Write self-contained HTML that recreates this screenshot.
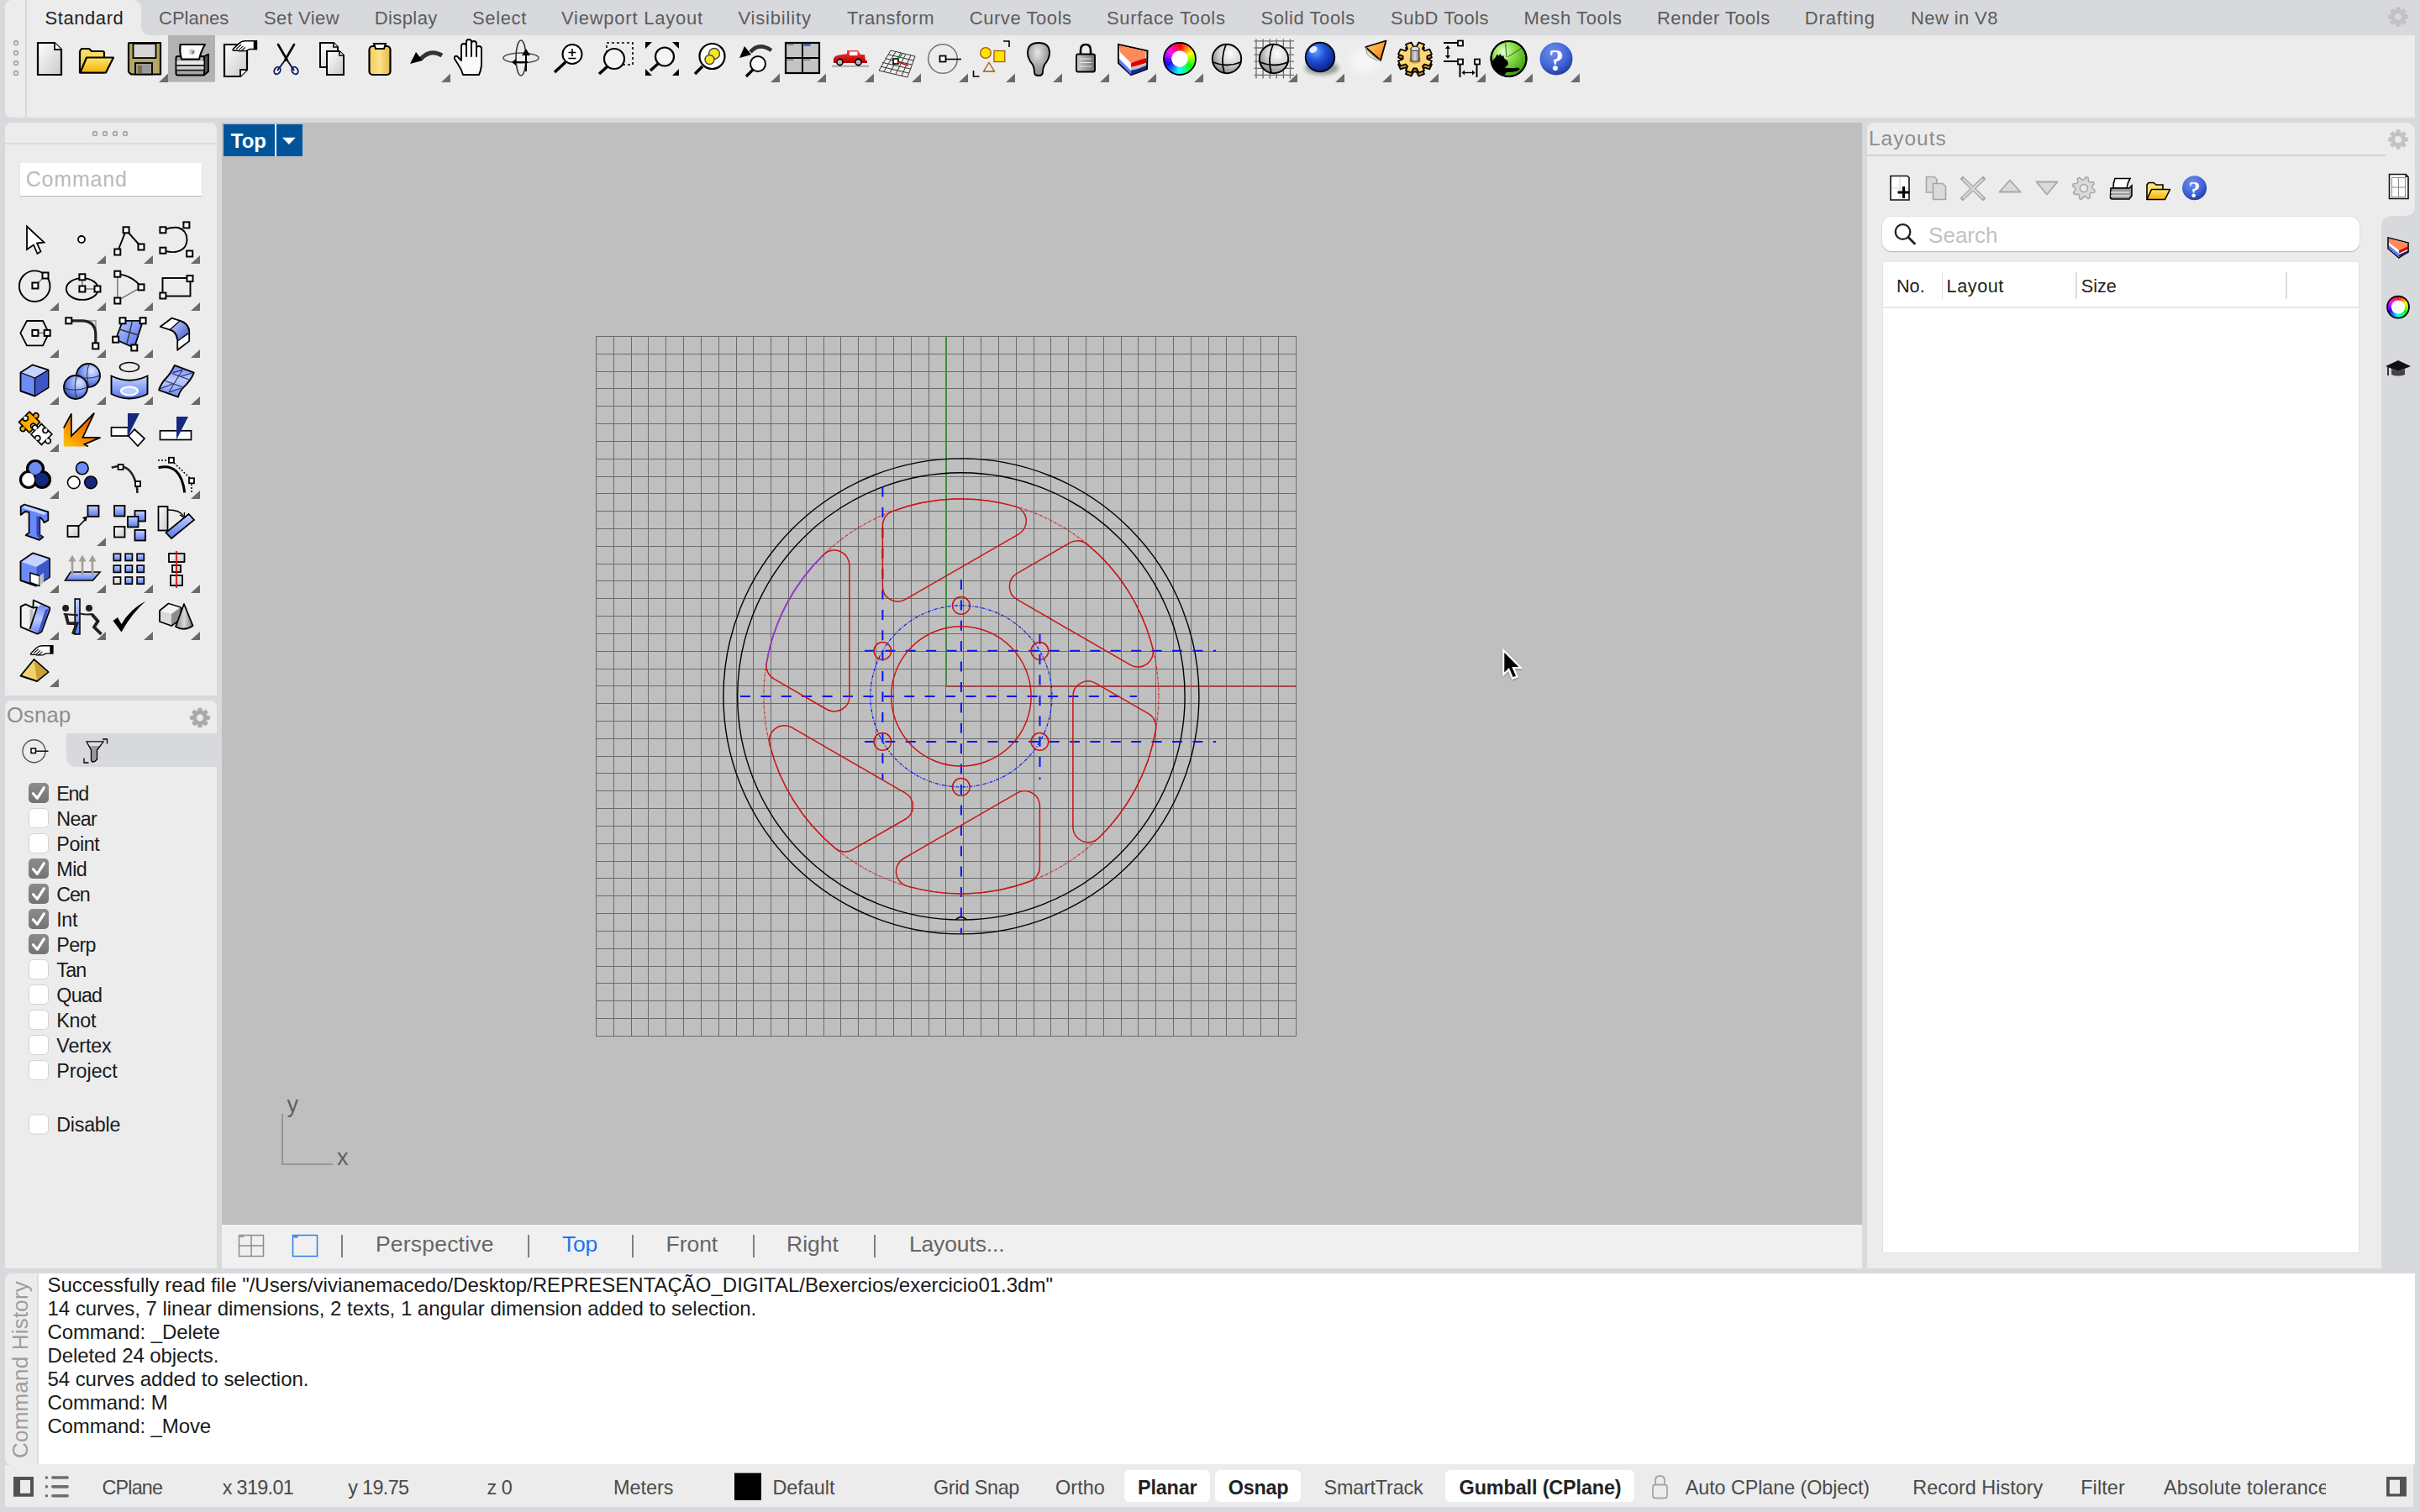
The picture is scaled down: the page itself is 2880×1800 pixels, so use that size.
<!DOCTYPE html>
<html><head><meta charset="utf-8"><title>Rhino</title>
<style>
*{box-sizing:border-box;margin:0;padding:0}
html,body{width:2880px;height:1800px;overflow:hidden;background:#d8d9dd;font-family:"Liberation Sans", sans-serif;}
.a{position:absolute}
.t{position:absolute;white-space:nowrap;line-height:1}
</style></head><body>

<div class="a" style="left:6px;top:42px;width:2868px;height:98px;background:#ececec;border-radius:0 0 0 8px"></div>
<div class="a" style="left:6px;top:0px;width:26px;height:140px;background:#ececec;border-radius:8px 0 0 8px"></div>
<div class="a" style="left:30px;top:0px;width:2px;height:140px;background:#d8d9dd"></div>
<div class="a" style="left:32px;top:0;width:136px;height:42px;background:#ececec;border-radius:0 10px 0 0"></div>
<div class="a" style="left:168px;top:32px;width:10px;height:10px;background:#ececec"></div>
<div class="a" style="left:168px;top:22px;width:20px;height:20px;background:#d8d9dd;border-radius:0 0 0 10px"></div>
<div class="t" style="left:53.6px;top:11.38px;font-size:22px;color:#222222;letter-spacing:0.551px;">Standard</div>
<div class="t" style="left:189px;top:11.38px;font-size:22px;color:#5c5c5c;letter-spacing:0.006px;">CPlanes</div>
<div class="t" style="left:314px;top:11.38px;font-size:22px;color:#5c5c5c;letter-spacing:0.447px;">Set View</div>
<div class="t" style="left:445.7px;top:11.38px;font-size:22px;color:#5c5c5c;letter-spacing:0.409px;">Display</div>
<div class="t" style="left:562px;top:11.38px;font-size:22px;color:#5c5c5c;letter-spacing:0.642px;">Select</div>
<div class="t" style="left:668px;top:11.38px;font-size:22px;color:#5c5c5c;letter-spacing:0.769px;">Viewport Layout</div>
<div class="t" style="left:878.5px;top:11.38px;font-size:22px;color:#5c5c5c;letter-spacing:0.814px;">Visibility</div>
<div class="t" style="left:1008px;top:11.38px;font-size:22px;color:#5c5c5c;letter-spacing:0.509px;">Transform</div>
<div class="t" style="left:1153.7px;top:11.38px;font-size:22px;color:#5c5c5c;letter-spacing:0.567px;">Curve Tools</div>
<div class="t" style="left:1317px;top:11.38px;font-size:22px;color:#5c5c5c;letter-spacing:0.670px;">Surface Tools</div>
<div class="t" style="left:1500.6px;top:11.38px;font-size:22px;color:#5c5c5c;letter-spacing:0.555px;">Solid Tools</div>
<div class="t" style="left:1655px;top:11.38px;font-size:22px;color:#5c5c5c;letter-spacing:0.489px;">SubD Tools</div>
<div class="t" style="left:1813.6px;top:11.38px;font-size:22px;color:#5c5c5c;letter-spacing:0.603px;">Mesh Tools</div>
<div class="t" style="left:1971.9px;top:11.38px;font-size:22px;color:#5c5c5c;letter-spacing:0.456px;">Render Tools</div>
<div class="t" style="left:2147.7px;top:11.38px;font-size:22px;color:#5c5c5c;letter-spacing:0.908px;">Drafting</div>
<div class="t" style="left:2274px;top:11.38px;font-size:22px;color:#5c5c5c;letter-spacing:0.392px;">New in V8</div>
<svg class="a" style="left:0;top:0" width="2880" height="140"><defs>
<linearGradient id="gPage" x1="0" y1="0" x2="1" y2="1"><stop offset="0" stop-color="#ffffff"/><stop offset="1" stop-color="#c9c9c9"/></linearGradient>
<linearGradient id="gFold" x1="0" y1="0" x2="0" y2="1"><stop offset="0" stop-color="#ffe56a"/><stop offset="1" stop-color="#f2b10a"/></linearGradient>
<linearGradient id="gFoldB" x1="0" y1="0" x2="0" y2="1"><stop offset="0" stop-color="#ffe16b"/><stop offset="1" stop-color="#e9c23a"/></linearGradient>
<linearGradient id="gClip" x1="0" y1="0" x2="1" y2="0"><stop offset="0" stop-color="#f3cf5c"/><stop offset="0.5" stop-color="#fde089"/><stop offset="1" stop-color="#e2b844"/></linearGradient>
<radialGradient id="gSph" cx="0.62" cy="0.32" r="0.7"><stop offset="0" stop-color="#ffffff"/><stop offset="0.5" stop-color="#d8d8d8"/><stop offset="1" stop-color="#8a8a8a"/></radialGradient>
<radialGradient id="gBlue" cx="0.35" cy="0.3" r="0.75"><stop offset="0" stop-color="#6aa0ff"/><stop offset="0.45" stop-color="#1c4fd8"/><stop offset="1" stop-color="#0a1e80"/></radialGradient>
<radialGradient id="gGreen" cx="0.35" cy="0.3" r="0.75"><stop offset="0" stop-color="#e6ffd0"/><stop offset="0.4" stop-color="#8ee04a"/><stop offset="1" stop-color="#3a9a10"/></radialGradient>
<radialGradient id="gHelp" cx="0.4" cy="0.3" r="0.8"><stop offset="0" stop-color="#6f8ff0"/><stop offset="0.6" stop-color="#3f63d6"/><stop offset="1" stop-color="#1b2f8a"/></radialGradient>
<radialGradient id="gBulb" cx="0.45" cy="0.3" r="0.7"><stop offset="0" stop-color="#e8e8e8"/><stop offset="0.6" stop-color="#a5a5a5"/><stop offset="1" stop-color="#8a8a8a"/></radialGradient>
<linearGradient id="gLock" x1="0" y1="0" x2="1" y2="0"><stop offset="0" stop-color="#d0d0d0"/><stop offset="1" stop-color="#6e6e6e"/></linearGradient>
<linearGradient id="gBlueF" x1="0" y1="0" x2="1" y2="1"><stop offset="0" stop-color="#b9c8ff"/><stop offset="1" stop-color="#4a6cf0"/></linearGradient>
<linearGradient id="gBlueS" x1="0" y1="0" x2="0" y2="1"><stop offset="0" stop-color="#c8d4ff"/><stop offset="1" stop-color="#5577ee"/></linearGradient>
<linearGradient id="gCone" x1="0" y1="0" x2="1" y2="1"><stop offset="0" stop-color="#ffe070"/><stop offset="1" stop-color="#ff6a00"/></linearGradient>
<linearGradient id="gGearS" x1="0" y1="0" x2="0" y2="1"><stop offset="0" stop-color="#ffe39a"/><stop offset="1" stop-color="#d88a2a"/></linearGradient>
<linearGradient id="gCyl" x1="0" y1="0" x2="1" y2="0"><stop offset="0" stop-color="#888"/><stop offset="0.5" stop-color="#d9d9d9"/><stop offset="1" stop-color="#777"/></linearGradient>
<linearGradient id="gRed" x1="0" y1="0" x2="0" y2="1"><stop offset="0" stop-color="#ff3a3a"/><stop offset="1" stop-color="#b00000"/></linearGradient>
<filter id="blur2" x="-50%" y="-50%" width="200%" height="200%"><feGaussianBlur stdDeviation="2.5"/></filter>
<filter id="blur4" x="-50%" y="-50%" width="200%" height="200%"><feGaussianBlur stdDeviation="5"/></filter>
<radialGradient id="gBlue2" cx="0.65" cy="0.3" r="0.8"><stop offset="0" stop-color="#e0e8ff"/><stop offset="0.5" stop-color="#7d9bf7"/><stop offset="1" stop-color="#2c46b8"/></radialGradient>
<linearGradient id="gExp" x1="0" y1="1" x2="1" y2="0"><stop offset="0" stop-color="#ffc400"/><stop offset="1" stop-color="#e83800"/></linearGradient>
<linearGradient id="gChk" x1="0" y1="0" x2="0" y2="1"><stop offset="0" stop-color="#8a8a8a"/><stop offset="1" stop-color="#6c6c6c"/></linearGradient>
<linearGradient id="gPyr" x1="0" y1="0" x2="1" y2="0"><stop offset="0" stop-color="#f7dc7a"/><stop offset="1" stop-color="#d9b242"/></linearGradient>
</defs><path d="M45 51 H65 L73 59 V89 H45 Z" fill="url(#gPage)" stroke="#000" stroke-width="2.2" stroke-linejoin="miter"/><path d="M65 51 V59 H73" fill="#fff" stroke="#000" stroke-width="1.7600000000000002"/><path d="M95 61 L97 58 H106 L109 61 H122 Q124 61 124 63 V86.5 H95 Z" fill="url(#gFoldB)" stroke="#000" stroke-width="2.2" stroke-linejoin="round"/><path d="M103 68.5 H135 L126 86.5 H95.5 Z" fill="url(#gFold)" stroke="#000" stroke-width="2.2" stroke-linejoin="round"/><path d="M153 52 Q153 51 154 51 H191 V88.5 H156 L153 85.5 Z" fill="#b8a664" stroke="#000" stroke-width="2.2" stroke-linejoin="round"/><rect x="158.5" y="52" width="27" height="17" fill="#d6d6d6" stroke="#000" stroke-width="1.8"/><rect x="161" y="75" width="20" height="13.5" fill="#9a9a9a" stroke="#000" stroke-width="1.8"/><rect x="164" y="78" width="5" height="9" fill="#7a6e3c"/><path d="M200 87.5 L200 98 L189 98 Z" fill="#6b6b6b"/><rect x="200" y="42" width="56" height="55.5" fill="#b2b2b2"/><path d="M243 67 L248 64.5 V85 L243 89.5 Z" fill="#4e4e4e" stroke="#000" stroke-width="1.8" stroke-linejoin="round"/><rect x="209.5" y="67" width="33.5" height="22.5" rx="2" fill="#a5a5a5" stroke="#000" stroke-width="2"/><rect x="210.5" y="72.5" width="32" height="4.5" fill="#e9e9e9"/><rect x="210.5" y="77" width="32" height="1.8" fill="#111"/><rect x="210.5" y="78.8" width="32" height="4" fill="#cfcfcf"/><rect x="210.5" y="82.8" width="32" height="1.6" fill="#111"/><path d="M214.5 53 H244 Q239.5 60 237 70.5 H216 Q213.5 62 214.5 53 Z" fill="#fff" stroke="#000" stroke-width="2" stroke-linejoin="round"/><path d="M225 59.5 l3.2 -1.8 l3.2 1.8 v3.8 l-3.2 1.8 l-3.2 -1.8 z" fill="#d0d0d0"/><path d="M228.2 61.3 l3.2 -1.8 v3.8 l-3.2 1.8 z" fill="#8a8a8a"/><path d="M267 53 H294 V83 L286 91 H267 Z" fill="url(#gPage)" stroke="#000" stroke-width="2.2"/><path d="M294 83 H286 V91" fill="#fff" stroke="#000" stroke-width="1.8"/><g transform="translate(276.5 48) scale(1.0)"><path d="M1.2 12.2 Q0 11.6 1 10.4 L8 3.6 Q11 0.8 15 0.8 H26 V10.6 H20.5 L16.5 12.4 Q14.5 13.2 12.8 12.4 L9.5 12.7 Q7.5 12.9 6.8 12.2 Z" fill="#fff" stroke="#000" stroke-width="1.5" stroke-linejoin="round"/><path d="M4.5 10.6 L10.5 5 M7.8 11.4 L13 6.8 M11.2 12 L15.5 8.4" stroke="#000" stroke-width="1.1"/><rect x="25.5" y="0" width="4.2" height="11.4" fill="#000"/></g><path d="M331 53 L342 72 M350 53 L339 72" stroke="#000" stroke-width="2.6" stroke-linecap="round"/><path d="M339 72 L330 84 M342 72 L350 84" stroke="#0a1a4a" stroke-width="2"/><ellipse cx="330" cy="84" rx="3.5" ry="4.5" fill="none" stroke="#0a1a6a" stroke-width="1.8" transform="rotate(30 330 84)"/><ellipse cx="351" cy="84" rx="3.5" ry="4.5" fill="none" stroke="#0a1a6a" stroke-width="1.8" transform="rotate(-30 351 84)"/><path d="M381 51 H397 L402 56 V80 H381 Z" fill="url(#gPage)" stroke="#000" stroke-width="2" stroke-linejoin="miter"/><path d="M397 51 V56 H402" fill="#fff" stroke="#000" stroke-width="1.6"/><path d="M389 61 H404 L409 66 V89 H389 Z" fill="url(#gPage)" stroke="#000" stroke-width="2" stroke-linejoin="miter"/><path d="M404 61 V66 H409" fill="#fff" stroke="#000" stroke-width="1.6"/><rect x="439.5" y="55" width="25" height="34" rx="4" fill="url(#gClip)" stroke="#000" stroke-width="2.2"/><path d="M445 52 H459 L457 58 H447 Z" fill="#fff" stroke="#000" stroke-width="2"/><path d="M501 70 Q512 58 526 66" fill="none" stroke="#333" stroke-width="5"/><path d="M488 76 L495 62 L503 72 Z" fill="#000"/><path d="M536 87.5 L536 98 L525 98 Z" fill="#6b6b6b"/><path d="M551 89 Q550 84 546 78 L541 70 Q540 66 544 67 L549 72 V55 Q549 52 552 52 Q555 52 555 55 V67 V50 Q555 47 558 47 Q561 47 561 50 V67 V52 Q561 49 564 49 Q567 49 567 52 V67 V57 Q567 55 570 55 Q573 55 573 58 V78 Q572 85 570 89 Z" fill="#fafafa" stroke="#000" stroke-width="1.9" stroke-linejoin="round"/><ellipse cx="620" cy="69" rx="21" ry="6" fill="none" stroke="#555" stroke-width="1.6"/><ellipse cx="620" cy="69" rx="6" ry="21" fill="none" stroke="#333" stroke-width="1.6"/><path d="M626 85 L626 62" stroke="#000" stroke-width="2"/><path d="M621 66 L626 58 L631 66 Z" fill="#000"/><path d="M628 74 L612 74" stroke="#000" stroke-width="2"/><path d="M614 70 L609 74 L614 78 Z" fill="#000"/><circle cx="681" cy="64.5" r="11.5" fill="#fff" stroke="#000" stroke-width="2"/><path d="M673 74 L660 86" stroke="#000" stroke-width="3.5"/><path d="M681 58 V67 M676.5 62.5 H685.5 M676.5 69.5 H685.5" stroke="#000" stroke-width="1.6"/><rect x="722" y="51" width="31" height="26" fill="none" stroke="#000" stroke-width="1.6" stroke-dasharray="3 3"/><circle cx="731" cy="70" r="12" fill="#f4f4f4" stroke="#000" stroke-width="2.2"/><path d="M723 79 L713 88" stroke="#000" stroke-width="3.5"/><path d="M768 50 H776 L768 58 Z M808 50 H800 L808 58 Z M768 90 H776 L768 82 Z M808 90 H800 L808 82 Z" fill="#000"/><circle cx="791" cy="67.5" r="11" fill="#f4f4f4" stroke="#000" stroke-width="2.2"/><path d="M783 76 L774 84" stroke="#000" stroke-width="3.5"/><circle cx="847.5" cy="67" r="15" fill="#fff" stroke="#000" stroke-width="2.2"/><circle cx="850" cy="64" r="6.5" fill="#f5e623" stroke="#444" stroke-width="1.4"/><circle cx="844.5" cy="71" r="5.5" fill="#f5e623" stroke="#444" stroke-width="1.4"/><path d="M836 79 L827 88" stroke="#000" stroke-width="3.5"/><path d="M893 62 Q903 50 918 60" fill="none" stroke="#333" stroke-width="4.5"/><path d="M880 69 L886 55 L894 65 Z" fill="#000"/><circle cx="902" cy="76" r="9" fill="#fafafa" stroke="#000" stroke-width="2"/><path d="M896 83 L888 91" stroke="#000" stroke-width="3.2"/><path d="M928 87.5 L928 98 L917 98 Z" fill="#6b6b6b"/><rect x="935" y="51" width="40" height="36" fill="#c4c4c4" stroke="#000" stroke-width="2.2"/><path d="M955 51 V87 M935 69 H975" stroke="#000" stroke-width="2"/><rect x="956.5" y="52.5" width="8" height="2" fill="#1a3ca8"/><rect x="936.5" y="52.5" width="8" height="1.5" fill="#777"/><rect x="936.5" y="70.5" width="8" height="1.5" fill="#777"/><rect x="956.5" y="70.5" width="8" height="1.5" fill="#777"/><path d="M983 87.5 L983 98 L972 98 Z" fill="#6b6b6b"/><rect x="990" y="78" width="44" height="1.6" fill="#9a9a9a"/><path d="M992 73 Q991 68 996 66 L1008 64 V60 H1021 L1024 65 H1029 L1030 72 H1032 V75 H992 Z" fill="url(#gRed)"/><rect x="1011" y="61.5" width="9.5" height="4.5" fill="#fff"/><circle cx="999.5" cy="74" r="3.6" fill="#bbb" stroke="#000" stroke-width="1.6"/><circle cx="1021.5" cy="74" r="3.6" fill="#bbb" stroke="#000" stroke-width="1.6"/><path d="M1040 87.5 L1040 98 L1029 98 Z" fill="#6b6b6b"/><g stroke="#333" stroke-width="1" fill="none"><path d="M1060 60 L1089 67 L1080 92 L1046 84 Z"/><path d="M1057 64.8 L1087 72 M1053.5 69.6 L1085 77 M1050 74.4 L1083.5 82 M1048 79.2 L1081.5 87"/><path d="M1066 61.4 L1052 85 M1072 62.8 L1059 86.6 M1078 64.2 L1066 88.2 M1084 65.6 L1073 90"/></g><rect x="1063" y="70" width="6" height="6" fill="#fff" stroke="#000" stroke-width="1.6"/><path d="M1069 70 L1074 64" stroke="#1a9a1a" stroke-width="1.6"/><path d="M1069 74 L1081 78" stroke="#d01010" stroke-width="1.8"/><path d="M1096 87.5 L1096 98 L1085 98 Z" fill="#6b6b6b"/><circle cx="1122" cy="70" r="17.3" fill="none" stroke="#777" stroke-width="1.6"/><rect x="1118.5" y="66.5" width="7" height="7" fill="#fff" stroke="#000" stroke-width="1.8"/><path d="M1125.5 70.5 H1144" stroke="#000" stroke-width="1.6"/><path d="M1152 87.5 L1152 98 L1141 98 Z" fill="#6b6b6b"/><circle cx="1173" cy="63" r="6.3" fill="#ffe400" stroke="#a05a00" stroke-width="1.3"/><rect x="1183" y="60.5" width="12.8" height="13" fill="#ffe400" stroke="#a05a00" stroke-width="1.3"/><path d="M1177 74.5 L1183.5 85 H1170.5 Z" fill="none" stroke="#a05a00" stroke-width="1.3"/><path d="M1194 49 H1201 V56 M1158.5 84 V91 H1165.5" fill="none" stroke="#000" stroke-width="1.6"/><path d="M1208 87.5 L1208 98 L1197 98 Z" fill="#6b6b6b"/><path d="M1236 51 Q1249 51 1249 63 Q1249 70 1243 77 Q1241 81 1241 86 Q1241 90 1236 90 Q1231 90 1231 86 Q1231 81 1229 77 Q1223 70 1223 63 Q1223 51 1236 51 Z" fill="url(#gBulb)" stroke="#000" stroke-width="1.9"/><path d="M1264 87.5 L1264 98 L1253 98 Z" fill="#6b6b6b"/><path d="M1286 66 V60 Q1286 53 1292 53 Q1298 53 1298 60 V66" fill="none" stroke="#000" stroke-width="2.6"/><rect x="1281" y="64.5" width="22" height="21" rx="2" fill="url(#gLock)" stroke="#000" stroke-width="1.9"/><path d="M1285 70 H1299 M1285 74.5 H1299 M1285 79 H1299" stroke="#e8e8e8" stroke-width="1.2"/><path d="M1320 87.5 L1320 98 L1309 98 Z" fill="#6b6b6b"/><path d="M1331 53 L1365.5 60.5 L1365 82 Q1355 86 1346 89 L1331 75 Z" fill="#fff" stroke="#000" stroke-width="2"/><path d="M1332 54 L1364 61 L1363 70 Q1354 72 1346 75 L1333 62 Z" fill="#ff8a5a"/><path d="M1346 75 Q1354 72 1364 69 V75 Q1355 78 1346 80 Z" fill="#e00000"/><path d="M1346 80 Q1355 78 1364 75 V78 Q1355 82 1346 84 Z" fill="#c0c0c0"/><path d="M1346 84 Q1355 82 1364 78 V82 Q1355 86 1346 89 Z" fill="#1a2a90"/><path d="M1332 70 L1346 84 V89 L1332 75 Z" fill="#5a7aff"/><path d="M1376 87.5 L1376 98 L1365 98 Z" fill="#6b6b6b"/><path d="M1404.00 51.00 A19 19 0 0 1 1406.60 51.18 L1405.32 60.49 A9.6 9.6 0 0 0 1404.00 60.40 Z" fill="#ff0000"/><path d="M1406.48 51.16 A19 19 0 0 1 1409.04 51.68 L1406.55 60.74 A9.6 9.6 0 0 0 1405.25 60.48 Z" fill="#ff1f00"/><path d="M1408.92 51.65 A19 19 0 0 1 1411.39 52.49 L1407.73 61.15 A9.6 9.6 0 0 0 1406.48 60.73 Z" fill="#ff3f00"/><path d="M1411.27 52.45 A19 19 0 0 1 1413.61 53.61 L1408.85 61.72 A9.6 9.6 0 0 0 1407.67 61.13 Z" fill="#ff5f00"/><path d="M1413.50 53.55 A19 19 0 0 1 1415.66 55.00 L1409.89 62.42 A9.6 9.6 0 0 0 1408.80 61.69 Z" fill="#ff7f00"/><path d="M1415.57 54.93 A19 19 0 0 1 1417.52 56.65 L1410.83 63.26 A9.6 9.6 0 0 0 1409.84 62.38 Z" fill="#ff9f00"/><path d="M1417.44 56.56 A19 19 0 0 1 1419.15 58.53 L1411.65 64.21 A9.6 9.6 0 0 0 1410.79 63.21 Z" fill="#ffbf00"/><path d="M1419.07 58.43 A19 19 0 0 1 1420.52 60.61 L1412.35 65.25 A9.6 9.6 0 0 0 1411.62 64.16 Z" fill="#ffdf00"/><path d="M1420.45 60.50 A19 19 0 0 1 1421.60 62.84 L1412.89 66.38 A9.6 9.6 0 0 0 1412.31 65.20 Z" fill="#ffff00"/><path d="M1421.55 62.73 A19 19 0 0 1 1422.38 65.20 L1413.29 67.58 A9.6 9.6 0 0 0 1412.87 66.33 Z" fill="#dfff00"/><path d="M1422.35 65.08 A19 19 0 0 1 1422.85 67.64 L1413.53 68.81 A9.6 9.6 0 0 0 1413.27 67.52 Z" fill="#bfff00"/><path d="M1422.84 67.52 A19 19 0 0 1 1423.00 70.12 L1413.60 70.06 A9.6 9.6 0 0 0 1413.52 68.75 Z" fill="#9fff00"/><path d="M1423.00 70.00 A19 19 0 0 1 1422.82 72.60 L1413.51 71.32 A9.6 9.6 0 0 0 1413.60 70.00 Z" fill="#7fff00"/><path d="M1422.84 72.48 A19 19 0 0 1 1422.32 75.04 L1413.26 72.55 A9.6 9.6 0 0 0 1413.52 71.25 Z" fill="#5fff00"/><path d="M1422.35 74.92 A19 19 0 0 1 1421.51 77.39 L1412.85 73.73 A9.6 9.6 0 0 0 1413.27 72.48 Z" fill="#3fff00"/><path d="M1421.55 77.27 A19 19 0 0 1 1420.39 79.61 L1412.28 74.85 A9.6 9.6 0 0 0 1412.87 73.67 Z" fill="#1fff00"/><path d="M1420.45 79.50 A19 19 0 0 1 1419.00 81.66 L1411.58 75.89 A9.6 9.6 0 0 0 1412.31 74.80 Z" fill="#00ff00"/><path d="M1419.07 81.57 A19 19 0 0 1 1417.35 83.52 L1410.74 76.83 A9.6 9.6 0 0 0 1411.62 75.84 Z" fill="#00ff1f"/><path d="M1417.44 83.44 A19 19 0 0 1 1415.47 85.15 L1409.79 77.65 A9.6 9.6 0 0 0 1410.79 76.79 Z" fill="#00ff3f"/><path d="M1415.57 85.07 A19 19 0 0 1 1413.39 86.52 L1408.75 78.35 A9.6 9.6 0 0 0 1409.84 77.62 Z" fill="#00ff5f"/><path d="M1413.50 86.45 A19 19 0 0 1 1411.16 87.60 L1407.62 78.89 A9.6 9.6 0 0 0 1408.80 78.31 Z" fill="#00ff7f"/><path d="M1411.27 87.55 A19 19 0 0 1 1408.80 88.38 L1406.42 79.29 A9.6 9.6 0 0 0 1407.67 78.87 Z" fill="#00ff9f"/><path d="M1408.92 88.35 A19 19 0 0 1 1406.36 88.85 L1405.19 79.53 A9.6 9.6 0 0 0 1406.48 79.27 Z" fill="#00ffbf"/><path d="M1406.48 88.84 A19 19 0 0 1 1403.88 89.00 L1403.94 79.60 A9.6 9.6 0 0 0 1405.25 79.52 Z" fill="#00ffdf"/><path d="M1404.00 89.00 A19 19 0 0 1 1401.40 88.82 L1402.68 79.51 A9.6 9.6 0 0 0 1404.00 79.60 Z" fill="#00ffff"/><path d="M1401.52 88.84 A19 19 0 0 1 1398.96 88.32 L1401.45 79.26 A9.6 9.6 0 0 0 1402.75 79.52 Z" fill="#00dfff"/><path d="M1399.08 88.35 A19 19 0 0 1 1396.61 87.51 L1400.27 78.85 A9.6 9.6 0 0 0 1401.52 79.27 Z" fill="#00bfff"/><path d="M1396.73 87.55 A19 19 0 0 1 1394.39 86.39 L1399.15 78.28 A9.6 9.6 0 0 0 1400.33 78.87 Z" fill="#009fff"/><path d="M1394.50 86.45 A19 19 0 0 1 1392.34 85.00 L1398.11 77.58 A9.6 9.6 0 0 0 1399.20 78.31 Z" fill="#007fff"/><path d="M1392.43 85.07 A19 19 0 0 1 1390.48 83.35 L1397.17 76.74 A9.6 9.6 0 0 0 1398.16 77.62 Z" fill="#005fff"/><path d="M1390.56 83.44 A19 19 0 0 1 1388.85 81.47 L1396.35 75.79 A9.6 9.6 0 0 0 1397.21 76.79 Z" fill="#003fff"/><path d="M1388.93 81.57 A19 19 0 0 1 1387.48 79.39 L1395.65 74.75 A9.6 9.6 0 0 0 1396.38 75.84 Z" fill="#001fff"/><path d="M1387.55 79.50 A19 19 0 0 1 1386.40 77.16 L1395.11 73.62 A9.6 9.6 0 0 0 1395.69 74.80 Z" fill="#0000ff"/><path d="M1386.45 77.27 A19 19 0 0 1 1385.62 74.80 L1394.71 72.42 A9.6 9.6 0 0 0 1395.13 73.67 Z" fill="#1f00ff"/><path d="M1385.65 74.92 A19 19 0 0 1 1385.15 72.36 L1394.47 71.19 A9.6 9.6 0 0 0 1394.73 72.48 Z" fill="#3f00ff"/><path d="M1385.16 72.48 A19 19 0 0 1 1385.00 69.88 L1394.40 69.94 A9.6 9.6 0 0 0 1394.48 71.25 Z" fill="#5f00ff"/><path d="M1385.00 70.00 A19 19 0 0 1 1385.18 67.40 L1394.49 68.68 A9.6 9.6 0 0 0 1394.40 70.00 Z" fill="#7f00ff"/><path d="M1385.16 67.52 A19 19 0 0 1 1385.68 64.96 L1394.74 67.45 A9.6 9.6 0 0 0 1394.48 68.75 Z" fill="#9f00ff"/><path d="M1385.65 65.08 A19 19 0 0 1 1386.49 62.61 L1395.15 66.27 A9.6 9.6 0 0 0 1394.73 67.52 Z" fill="#bf00ff"/><path d="M1386.45 62.73 A19 19 0 0 1 1387.61 60.39 L1395.72 65.15 A9.6 9.6 0 0 0 1395.13 66.33 Z" fill="#df00ff"/><path d="M1387.55 60.50 A19 19 0 0 1 1389.00 58.34 L1396.42 64.11 A9.6 9.6 0 0 0 1395.69 65.20 Z" fill="#ff00ff"/><path d="M1388.93 58.43 A19 19 0 0 1 1390.65 56.48 L1397.26 63.17 A9.6 9.6 0 0 0 1396.38 64.16 Z" fill="#ff00df"/><path d="M1390.56 56.56 A19 19 0 0 1 1392.53 54.85 L1398.21 62.35 A9.6 9.6 0 0 0 1397.21 63.21 Z" fill="#ff00bf"/><path d="M1392.43 54.93 A19 19 0 0 1 1394.61 53.48 L1399.25 61.65 A9.6 9.6 0 0 0 1398.16 62.38 Z" fill="#ff009f"/><path d="M1394.50 53.55 A19 19 0 0 1 1396.84 52.40 L1400.38 61.11 A9.6 9.6 0 0 0 1399.20 61.69 Z" fill="#ff007f"/><path d="M1396.73 52.45 A19 19 0 0 1 1399.20 51.62 L1401.58 60.71 A9.6 9.6 0 0 0 1400.33 61.13 Z" fill="#ff005f"/><path d="M1399.08 51.65 A19 19 0 0 1 1401.64 51.15 L1402.81 60.47 A9.6 9.6 0 0 0 1401.52 60.73 Z" fill="#ff003f"/><path d="M1401.52 51.16 A19 19 0 0 1 1404.12 51.00 L1404.06 60.40 A9.6 9.6 0 0 0 1402.75 60.48 Z" fill="#ff001f"/><circle cx="1404" cy="70" r="9.6" fill="#fff"/><circle cx="1404" cy="70" r="19" fill="none" stroke="#000" stroke-width="1.8"/><path d="M1432 87.5 L1432 98 L1421 98 Z" fill="#6b6b6b"/><circle cx="1460" cy="70" r="17.2" fill="url(#gSph)" stroke="#000" stroke-width="2"/><path d="M1443.5 74 Q1460 81 1476.5 74" fill="none" stroke="#000" stroke-width="1.8"/><path d="M1459 53 Q1452 70 1457 87" fill="none" stroke="#000" stroke-width="1.8"/><g stroke="#6e6e6e" stroke-width="1.3"><path d="M1495.0 46.5 V93.5"/><path d="M1503.1 46.5 V93.5"/><path d="M1511.2 46.5 V93.5"/><path d="M1519.3 46.5 V93.5"/><path d="M1527.4 46.5 V93.5"/><path d="M1535.5 46.5 V93.5"/><path d="M1492.5 48.9 H1540"/><path d="M1492.5 57.0 H1540"/><path d="M1492.5 65.1 H1540"/><path d="M1492.5 73.19999999999999 H1540"/><path d="M1492.5 81.3 H1540"/><path d="M1492.5 89.4 H1540"/></g><circle cx="1516" cy="70" r="17.2" fill="url(#gSph)" stroke="#000" stroke-width="2"/><path d="M1499.5 74 Q1516 81 1532.5 74" fill="none" stroke="#000" stroke-width="1.8"/><path d="M1515 53 Q1508 70 1513 87" fill="none" stroke="#000" stroke-width="1.8"/><path d="M1544 87.5 L1544 98 L1533 98 Z" fill="#6b6b6b"/><ellipse cx="1573" cy="81" rx="20" ry="8" fill="#000" opacity="0.35" filter="url(#blur2)"/><circle cx="1571" cy="68" r="17.3" fill="url(#gBlue)" stroke="#000" stroke-width="1.8"/><ellipse cx="1563" cy="59" rx="5" ry="3.5" fill="#e8f0ff" transform="rotate(-30 1563 59)"/><path d="M1600 87.5 L1600 98 L1589 98 Z" fill="#6b6b6b"/><ellipse cx="1625" cy="72" rx="18" ry="14" fill="#ffffff" opacity="0.55" filter="url(#blur4)"/><path d="M1625 56 L1649.5 48.5 L1643 72 Z" fill="url(#gCone)" stroke="#000" stroke-width="1.8" stroke-linejoin="round"/><path d="M1625 56 Q1630 66 1643 72 Q1632 71 1627 64 Z" fill="#fff2cc" stroke="#888" stroke-width="1"/><path d="M1656 87.5 L1656 98 L1645 98 Z" fill="#6b6b6b"/><polygon points="1698.4,74.1 1704.0,76.5 1701.3,82.4 1695.4,80.5 1692.9,82.8 1695.0,88.1 1688.5,90.5 1685.8,85.5 1682.2,85.5 1679.5,90.5 1673.0,88.1 1675.1,82.8 1672.6,80.5 1666.7,82.4 1664.0,76.5 1669.6,74.1 1669.6,70.9 1664.0,68.5 1666.7,62.6 1672.6,64.5 1675.1,62.2 1673.0,56.9 1679.5,54.5 1682.2,59.5 1685.8,59.5 1688.5,54.5 1695.0,56.9 1692.9,62.2 1695.4,64.5 1701.3,62.6 1704.0,68.5 1698.4,70.9" fill="#d48a2a" stroke="#000" stroke-width="1.8" stroke-linejoin="round"/><polygon points="1698.4,70.1 1704.0,72.5 1701.3,78.4 1695.4,76.5 1692.9,78.8 1695.0,84.1 1688.5,86.5 1685.8,81.5 1682.2,81.5 1679.5,86.5 1673.0,84.1 1675.1,78.8 1672.6,76.5 1666.7,78.4 1664.0,72.5 1669.6,70.1 1669.6,66.9 1664.0,64.5 1666.7,58.6 1672.6,60.5 1675.1,58.2 1673.0,52.9 1679.5,50.5 1682.2,55.5 1685.8,55.5 1688.5,50.5 1695.0,52.9 1692.9,58.2 1695.4,60.5 1701.3,58.6 1704.0,64.5 1698.4,66.9" fill="#ffd778" stroke="#000" stroke-width="1.8" stroke-linejoin="round"/><ellipse cx="1684" cy="71" rx="7" ry="5" fill="#c98a30" opacity="0.6"/><rect x="1679" y="58" width="10" height="15" fill="url(#gCyl)" stroke="#333" stroke-width="1"/><ellipse cx="1684" cy="58" rx="5" ry="2.5" fill="#ddd" stroke="#333" stroke-width="1"/><path d="M1712 87.5 L1712 98 L1701 98 Z" fill="#6b6b6b"/><path d="M1718 51 H1735 M1718 73 H1735 M1737.5 76 V92 M1757.5 76 V92" stroke="#000" stroke-width="2"/><rect x="1735" y="48.5" width="6" height="6" fill="#fff" stroke="#000" stroke-width="1.8"/><rect x="1735" y="70.5" width="6" height="6" fill="#fff" stroke="#000" stroke-width="1.8"/><rect x="1755" y="70.5" width="6" height="6" fill="#fff" stroke="#000" stroke-width="1.8"/><path d="M1723 56 V68" stroke="#000" stroke-width="1.4"/><path d="M1720 58 L1723 54 L1726 58 Z M1720 66 L1723 70 L1726 66 Z" fill="#000"/><path d="M1742 86.5 H1753" stroke="#000" stroke-width="1.4"/><path d="M1743 83.5 L1739.5 86.5 L1743 89.5 Z M1752 83.5 L1755.5 86.5 L1752 89.5 Z" fill="#000"/><path d="M1768 87.5 L1768 98 L1757 98 Z" fill="#6b6b6b"/><circle cx="1795.5" cy="70" r="21" fill="url(#gGreen)" stroke="#000" stroke-width="2"/><clipPath id="cpGlobe"><circle cx="1795.5" cy="70" r="20"/></clipPath><g clip-path="url(#cpGlobe)"><path d="M1770 76 L1774 74.5 L1780 68 L1781.5 64.5 L1783.5 66.5 L1785.5 64 L1787 67 L1789 66 L1790.5 70 Q1796 72.5 1794.5 77.5 L1790.5 80.5 Q1798 81.5 1806 80.5 L1809 82 L1806 84.5 Q1798 86.5 1793 86 Q1790 90 1786 93 L1770 93 Z" fill="#000"/></g><path d="M1791.6 51.6 L1792.9 67.8 M1794.4 67.8 L1810.6 57.4" stroke="#2a4a1a" stroke-width="0.9" fill="none"/><circle cx="1795.5" cy="70" r="21" fill="none" stroke="#000" stroke-width="2"/><path d="M1824 87.5 L1824 98 L1813 98 Z" fill="#6b6b6b"/><circle cx="1852" cy="70" r="19.5" fill="url(#gHelp)"/><text x="1852" y="84" text-anchor="middle" font-family="Liberation Serif" font-weight="bold" font-size="36" fill="#fff">?</text><path d="M1880 87.5 L1880 98 L1869 98 Z" fill="#6b6b6b"/><circle cx="19" cy="51" r="2.4" fill="none" stroke="#a3a3a3" stroke-width="1.6"/><circle cx="19" cy="63" r="2.4" fill="none" stroke="#a3a3a3" stroke-width="1.6"/><circle cx="19" cy="75" r="2.4" fill="none" stroke="#a3a3a3" stroke-width="1.6"/><circle cx="19" cy="87" r="2.4" fill="none" stroke="#a3a3a3" stroke-width="1.6"/><polygon points="2851.49,11.87 2852.05,8.67 2855.95,8.67 2856.51,11.87 2857.97,12.47 2860.64,10.61 2863.39,13.36 2861.53,16.03 2862.13,17.49 2865.33,18.05 2865.33,21.95 2862.13,22.51 2861.53,23.97 2863.39,26.64 2860.64,29.39 2857.97,27.53 2856.51,28.13 2855.95,31.33 2852.05,31.33 2851.49,28.13 2850.03,27.53 2847.36,29.39 2844.61,26.64 2846.47,23.97 2845.87,22.51 2842.67,21.95 2842.67,18.05 2845.87,17.49 2846.47,16.03 2844.61,13.36 2847.36,10.61 2850.03,12.47" fill="#c2c2c4" stroke="#c2c2c4" stroke-width="0.8" stroke-linejoin="round"/><circle cx="2854" cy="20" r="3.91" fill="#d8d9dd"/></svg>
<div class="a" style="left:6px;top:146px;width:252px;height:682px;background:#ececec;border-radius:8px 8px 0 0"></div>
<div class="a" style="left:6px;top:170px;width:252px;height:2px;background:#dcdcdc"></div>
<div class="a" style="left:24px;top:193.5px;width:216px;height:39.5px;background:#fff;box-shadow:0 1px 1px rgba(0,0,0,0.18)"></div>
<div class="t" style="left:30.75px;top:201.14px;font-size:25px;color:#b9b9b9;letter-spacing:0.812px;">Command</div>
<svg class="a" style="left:0;top:0" width="260" height="830"><defs><linearGradient id="gPage" x1="0" y1="0" x2="1" y2="1"><stop offset="0" stop-color="#ffffff"/><stop offset="1" stop-color="#c9c9c9"/></linearGradient><linearGradient id="gBlueF" x1="0" y1="0" x2="1" y2="1"><stop offset="0" stop-color="#b9c8ff"/><stop offset="1" stop-color="#4a6cf0"/></linearGradient><linearGradient id="gBlueS" x1="0" y1="0" x2="0" y2="1"><stop offset="0" stop-color="#c8d4ff"/><stop offset="1" stop-color="#5577ee"/></linearGradient><radialGradient id="gBlue2" cx="0.65" cy="0.3" r="0.8"><stop offset="0" stop-color="#e0e8ff"/><stop offset="0.5" stop-color="#7d9bf7"/><stop offset="1" stop-color="#2c46b8"/></radialGradient><linearGradient id="gExp" x1="0" y1="1" x2="1" y2="0"><stop offset="0" stop-color="#ffc400"/><stop offset="1" stop-color="#e83800"/></linearGradient><linearGradient id="gPuz" x1="0" y1="0" x2="1" y2="1"><stop offset="0" stop-color="#ff9000"/><stop offset="1" stop-color="#ffc800"/></linearGradient><linearGradient id="gBlueD" x1="0" y1="0" x2="1" y2="1"><stop offset="0" stop-color="#c8d2ff"/><stop offset="1" stop-color="#3a54d0"/></linearGradient><linearGradient id="gWave" x1="0" y1="0" x2="0" y2="1"><stop offset="0" stop-color="#6a88fb"/><stop offset="0.45" stop-color="#bcc8ff"/><stop offset="0.6" stop-color="#b0bfff"/><stop offset="1" stop-color="#6a88fb"/></linearGradient><linearGradient id="gBend" x1="0" y1="0" x2="0" y2="1"><stop offset="0" stop-color="#6a88fb"/><stop offset="0.5" stop-color="#c0ccff"/><stop offset="1" stop-color="#6a88fb"/></linearGradient><linearGradient id="gCyl" x1="0" y1="0" x2="1" y2="0"><stop offset="0" stop-color="#888"/><stop offset="0.5" stop-color="#e9e9e9"/><stop offset="1" stop-color="#777"/></linearGradient></defs><circle cx="113" cy="159" r="2.4" fill="none" stroke="#a3a3a3" stroke-width="1.6"/><circle cx="125" cy="159" r="2.4" fill="none" stroke="#a3a3a3" stroke-width="1.6"/><circle cx="137" cy="159" r="2.4" fill="none" stroke="#a3a3a3" stroke-width="1.6"/><circle cx="149" cy="159" r="2.4" fill="none" stroke="#a3a3a3" stroke-width="1.6"/><path d="M32 269.5 L52.5 288.5 L44 289.5 L48.5 299.5 L44.5 302 L40 291.5 L32 297 Z" fill="#fff" stroke="#000" stroke-width="1.8" stroke-linejoin="miter"/><circle cx="97" cy="285" r="4" fill="#fff" stroke="#000" stroke-width="1.8"/><path d="M126 304 L126 314 L115 314 Z" fill="#6b6b6b"/><path d="M139.8 300 L150.1 273.8 L168 294" fill="none" stroke="#000" stroke-width="1.9"/><rect x="146.6" y="270.3" width="7" height="7" fill="#fff" stroke="#000" stroke-width="2"/><rect x="136.3" y="296.5" width="7" height="7" fill="#fff" stroke="#000" stroke-width="2"/><rect x="164.5" y="290.5" width="7" height="7" fill="#fff" stroke="#000" stroke-width="2"/><path d="M182 304 L182 314 L171 314 Z" fill="#6b6b6b"/><path d="M194 273.8 Q204 270 212 271 Q222.5 274 222.5 285.5 Q222 298 208 300 Q200 300.5 194 298.2" fill="none" stroke="#000" stroke-width="1.9"/><rect x="190.4" y="270.3" width="7" height="7" fill="#fff" stroke="#000" stroke-width="2"/><rect x="190.4" y="294.7" width="7" height="7" fill="#fff" stroke="#000" stroke-width="2"/><rect x="218.4" y="264.4" width="7" height="7" fill="#fff" stroke="#000" stroke-width="2"/><rect x="222.2" y="298.5" width="7" height="7" fill="#fff" stroke="#000" stroke-width="2"/><path d="M238 304 L238 314 L227 314 Z" fill="#6b6b6b"/><circle cx="41.2" cy="340.7" r="18.3" fill="none" stroke="#000" stroke-width="1.9"/><path d="M42 340 L54 328" stroke="#777" stroke-width="1.5"/><rect x="38.4" y="336.5" width="7" height="7" fill="#fff" stroke="#000" stroke-width="2"/><rect x="50.5" y="324.5" width="7" height="7" fill="#fff" stroke="#000" stroke-width="2"/><path d="M70 360 L70 370 L59 370 Z" fill="#6b6b6b"/><ellipse cx="97.9" cy="344" rx="19" ry="12.9" fill="none" stroke="#000" stroke-width="1.9"/><path d="M97.9 330 V344 H116" fill="none" stroke="#777" stroke-width="1.5"/><rect x="94.4" y="326.3" width="7" height="7" fill="#fff" stroke="#000" stroke-width="2"/><rect x="94.4" y="340.5" width="7" height="7" fill="#fff" stroke="#000" stroke-width="2"/><rect x="112.5" y="340.5" width="7" height="7" fill="#fff" stroke="#000" stroke-width="2"/><path d="M126 360 L126 370 L115 370 Z" fill="#6b6b6b"/><path d="M139.8 326.2 Q158 328 168 341.9" fill="none" stroke="#000" stroke-width="1.9"/><path d="M139.8 326.2 V358 L168 341.9" fill="none" stroke="#777" stroke-width="1.5"/><rect x="136.3" y="322.7" width="7" height="7" fill="#fff" stroke="#000" stroke-width="2"/><rect x="164.5" y="338.4" width="7" height="7" fill="#fff" stroke="#000" stroke-width="2"/><rect x="136.3" y="354.5" width="7" height="7" fill="#fff" stroke="#000" stroke-width="2"/><path d="M182 360 L182 370 L171 370 Z" fill="#6b6b6b"/><rect x="193.5" y="331" width="33" height="21.5" fill="none" stroke="#000" stroke-width="1.9"/><rect x="222.5" y="328.1" width="7" height="7" fill="#fff" stroke="#000" stroke-width="2"/><rect x="190.4" y="348.5" width="7" height="7" fill="#fff" stroke="#000" stroke-width="2"/><path d="M238 360 L238 370 L227 370 Z" fill="#6b6b6b"/><polygon points="24.3,396.4 32,382 51,382 58.2,396.4 51,411.3 32,411.3" fill="none" stroke="#000" stroke-width="1.8"/><path d="M42 396.4 H56" stroke="#777" stroke-width="1.5"/><rect x="38.4" y="392.9" width="7" height="7" fill="#fff" stroke="#000" stroke-width="2"/><rect x="52.7" y="392.9" width="7" height="7" fill="#fff" stroke="#000" stroke-width="2"/><path d="M70 416 L70 426 L59 426 Z" fill="#6b6b6b"/><path d="M82 381.8 H114 V411.9" fill="none" stroke="#888" stroke-width="1.3"/><path d="M82 381.8 H97 Q113.8 382 113.8 398 V411.9" fill="none" stroke="#222" stroke-width="3.2"/><rect x="78.3" y="378.3" width="7" height="7" fill="#fff" stroke="#000" stroke-width="2"/><rect x="110.3" y="408.4" width="7" height="7" fill="#fff" stroke="#000" stroke-width="2"/><path d="M126 416 L126 426 L115 426 Z" fill="#6b6b6b"/><path d="M146 381.8 H170.1 L159.8 414 L137.7 404.2 Z" fill="url(#gBlueF)" stroke="#000" stroke-width="1.8"/><path d="M157.5 382 L151 409 M142 392 L165 399" stroke="#333" stroke-width="1.4"/><rect x="142.5" y="378.3" width="7" height="7" fill="#fff" stroke="#000" stroke-width="2"/><rect x="166.6" y="378.3" width="7" height="7" fill="#fff" stroke="#000" stroke-width="2"/><rect x="134.2" y="400.7" width="7" height="7" fill="#fff" stroke="#000" stroke-width="2"/><rect x="156.3" y="410.5" width="7" height="7" fill="#fff" stroke="#000" stroke-width="2"/><path d="M182 416 L182 426 L171 426 Z" fill="#6b6b6b"/><path d="M190.7 389 L204.4 378.7 L213.7 381.7 Q224.5 385 225.2 394.6 V406.1 L211.2 416.8 V404.5 Q210 394.5 202.2 392.6 Z" fill="#fff" stroke="#000" stroke-width="1.8" stroke-linejoin="round"/><path d="M202.2 392.6 L213.7 382.3 Q224 386 224.8 396.4 L211.7 405.7 Q210.5 395 202.2 392.6 Z" fill="url(#gBlueD)"/><path d="M202.2 392.6 L213.7 382.3 M211.7 405.7 L224.8 396.4" stroke="#000" stroke-width="1.3"/><path d="M213.7 381.7 Q224.5 385 225.2 394.6 M211.2 404.5 Q210 394.5 202.2 392.6" fill="none" stroke="#000" stroke-width="1.8"/><path d="M238 416 L238 426 L227 426 Z" fill="#6b6b6b"/><path d="M24.5 443.5 L38.5 434.5 L57.5 440.5 V461.5 L41.5 471.5 L24.5 465.5 Z" fill="#6b8cf5" stroke="#000" stroke-width="1.9" stroke-linejoin="round"/><path d="M25.5 444 L39 435.5 L56.5 441 L41.5 450 Z" fill="#c5d2ff"/><path d="M41.5 450 L57 441 V461 L41.5 471 Z" fill="#3c56c8"/><path d="M24.5 443.5 L41.5 450 L57.5 440.5 M41.5 450 V471.5" fill="none" stroke="#000" stroke-width="1.3"/><path d="M70 472 L70 482 L59 482 Z" fill="#6b6b6b"/><circle cx="105" cy="447" r="14" fill="url(#gBlue2)" stroke="#000" stroke-width="1.9"/><circle cx="90" cy="461" r="14" fill="url(#gBlue2)" stroke="#000" stroke-width="1.9"/><path d="M91.5 447 Q87 460 91.5 475 M77 462 Q90 467 104 461 M106 433 Q101 446 106 461 M92 448 Q105 453 119 447" fill="none" stroke="#333" stroke-width="1.1"/><path d="M126 472 L126 482 L115 482 Z" fill="#6b6b6b"/><ellipse cx="154" cy="437" rx="11.5" ry="5.5" fill="none" stroke="#000" stroke-width="1.6"/><path d="M132.5 447.5 Q154 458 175.5 447.5 V469 Q154 480 132.5 469 Z" fill="url(#gBlueS)" stroke="#000" stroke-width="1.9"/><ellipse cx="154" cy="465.5" rx="10" ry="5" fill="#bcd0ff" stroke="#fff" stroke-width="2.2"/><path d="M182 472 L182 482 L171 482 Z" fill="#6b6b6b"/><path d="M207.8 434.9 L230.8 443.7 C228 451 223 457 217.7 461.9 C214.5 465 213 469 212.1 472.6 L189.1 464.3 C191 459 193 455 196.5 451.5 C201 447 204 443 207.8 434.9 Z" fill="url(#gWave)" stroke="#000" stroke-width="1.9" stroke-linejoin="round"/><path d="M204.6 444.4 L225.2 452 M196.7 453.6 L217.3 460.7 M217.3 440 L201 466.7 M205.8 443.6 L217.7 440.1 M214.9 448 L228.8 444 M190.3 463.1 L205.4 457.1 M201.4 467.1 L214.9 462.3" fill="none" stroke="#2a2f55" stroke-width="1.1"/><path d="M238 472 L238 482 L227 482 Z" fill="#6b6b6b"/><path d="M35.00 490.15 L39.74 494.89 A3.1 3.1 0 1 1 42.71 497.86 L47.45 502.60 L42.71 507.34 A3.1 3.1 0 1 0 39.74 510.31 L35.00 515.05 L30.26 510.31 A3.1 3.1 0 1 1 27.29 507.34 L22.55 502.60 L27.29 497.86 A3.1 3.1 0 1 0 30.26 494.89 L35.00 490.15 Z" fill="url(#gPuz)" stroke="#000" stroke-width="1.7" stroke-linejoin="miter"/><path d="M49.40 504.55 L54.14 509.29 A3.1 3.1 0 1 0 57.11 512.26 L61.85 517.00 L57.11 521.74 A3.1 3.1 0 1 1 54.14 524.71 L49.40 529.45 L44.66 524.71 A3.1 3.1 0 1 0 41.69 521.74 L36.95 517.00 L41.69 512.26 A3.1 3.1 0 1 1 44.66 509.29 L49.40 504.55 Z" fill="#fff" stroke="#000" stroke-width="1.7" stroke-linejoin="miter"/><path d="M70 528 L70 538 L59 538 Z" fill="#6b6b6b"/><path d="M75.8 509.5 L84.9 492.3 L84.9 519.1 L112.2 491.6 L98.5 520.9 L119.5 520.9 L100.4 528.9 L104.9 531.6 H75.8 Z" fill="url(#gExp)"/><path d="M75.8 509.5 L84.9 492.3 L84.9 519.1 L112.2 491.6 L98.5 520.9 L119.5 520.9 L100.4 528.9 L104.9 531.4" fill="none" stroke="#000" stroke-width="1.7" stroke-linejoin="miter"/><rect x="132.5" y="508.8" width="20" height="10.2" fill="#fff" stroke="#000" stroke-width="1.7"/><path d="M152 492 H166 L152 520 Z" fill="#14287e"/><path d="M153 519 L160 511 L172 522 L164 531 Z" fill="#fff" stroke="#000" stroke-width="1.7"/><rect x="190.5" y="512.8" width="37" height="10.7" fill="#fff" stroke="#000" stroke-width="1.7"/><path d="M210 496 H224 L210 523.5 Z" fill="#14287e"/><circle cx="42" cy="558" r="9.5" fill="#6b8cf5" stroke="#000" stroke-width="3.2"/><circle cx="34" cy="571" r="9.5" fill="#fff" stroke="#000" stroke-width="3.2"/><circle cx="50" cy="571" r="9.5" fill="#14287e" stroke="#000" stroke-width="3.2"/><circle cx="42" cy="558" r="7.2" fill="#6b8cf5"/><circle cx="34" cy="571" r="7.2" fill="#fff"/><path d="M42 566 A7.2 7.2 0 0 1 50 563.8 A7.2 7.2 0 1 1 44 576" fill="#14287e"/><path d="M70 584 L70 594 L59 594 Z" fill="#6b6b6b"/><circle cx="97.8" cy="557.4" r="7.3" fill="#6b8cf5" stroke="#000" stroke-width="1.6"/><circle cx="87.8" cy="574.3" r="7.3" fill="#fff" stroke="#000" stroke-width="1.6"/><circle cx="108" cy="574.3" r="7.3" fill="#14287e" stroke="#000" stroke-width="1.6"/><path d="M132.8 556.7 Q152 550 160 570 Q164 580 163.3 587" fill="none" stroke="#222" stroke-width="2.6"/><rect x="140.6" y="553.0" width="6" height="6" fill="#fff" stroke="#000" stroke-width="1.8"/><rect x="161.0" y="573.0" width="6" height="6" fill="#fff" stroke="#000" stroke-width="1.8"/><path d="M188.6 556.7 Q215 550 219.8 586.5" fill="none" stroke="#000" stroke-width="3"/><path d="M188 548 H200 M207 551 L226 569 M228 576 V588" fill="none" stroke="#000" stroke-width="1.5" stroke-dasharray="2 2"/><rect x="200.9" y="544.8" width="6" height="6" fill="#fff" stroke="#000" stroke-width="1.8"/><rect x="225.0" y="569.3" width="6" height="6" fill="#fff" stroke="#000" stroke-width="1.8"/><path d="M238 584 L238 594 L227 594 Z" fill="#6b6b6b"/><path d="M24.7 603.1 L29.1 600.5 L57.3 609.4 V619.4 L52.5 622.1 Q51 618 47.3 615.8 V636.8 L51.3 639.2 L46.9 642.8 L30.7 637.2 L34.6 634 V609.8 Q31 609 29.9 609 L24.7 613 Z" fill="#6b88fb" stroke="#000" stroke-width="1.8" stroke-linejoin="round"/><path d="M26 604.5 L29.5 602 L56 610.5 L52.5 613 Z" fill="#c8d4ff"/><path d="M43.5 614 L47.3 615.8 V636.8 L50 638.5 L46 641 Q44 638 43.5 636 Z" fill="#2f47b5"/><rect x="80.5" y="626" width="13" height="13" fill="url(#gPage)" stroke="#000" stroke-width="1.8"/><rect x="104.5" y="602" width="13" height="13" fill="url(#gBlueS)" stroke="#000" stroke-width="1.8"/><path d="M93 627 L102 618" stroke="#000" stroke-width="1.6"/><path d="M98 616 L104 614.5 L102.5 621 Z" fill="#000"/><path d="M126 640 L126 650 L115 650 Z" fill="#6b6b6b"/><rect x="136" y="602" width="12.5" height="12.5" fill="url(#gBlueS)" stroke="#000" stroke-width="1.8"/><rect x="160.5" y="608" width="12.5" height="12.5" fill="url(#gBlueS)" stroke="#000" stroke-width="1.8"/><rect x="152" y="615" width="12.5" height="12.5" fill="url(#gBlueS)" stroke="#000" stroke-width="1.8"/><rect x="136" y="627" width="12.5" height="12.5" fill="url(#gPage)" stroke="#000" stroke-width="1.8"/><rect x="160.5" y="631" width="12.5" height="12.5" fill="url(#gBlueS)" stroke="#000" stroke-width="1.8"/><rect x="188.5" y="603" width="11" height="28.5" fill="url(#gPage)" stroke="#000" stroke-width="1.8"/><path d="M204 641 L231 619 L224.5 612 L197.5 634 Z" fill="url(#gBlueS)" stroke="#000" stroke-width="1.8"/><path d="M200 607 Q214 607 218 614" fill="none" stroke="#000" stroke-width="1.4"/><path d="M214 613 L219 616 L219.5 610" fill="none" stroke="#000" stroke-width="1.4"/><path d="M24.5 668.5 L39 658.5 L59 665 V687 L43 697.5 L24.5 691 Z" fill="#6b8cf5" stroke="#000" stroke-width="1.9" stroke-linejoin="round"/><path d="M25.5 669 L39.5 659.5 L58 665.5 L43.5 675 Z" fill="#c5d2ff"/><path d="M43.5 675 L58.5 665.5 V687 L43.5 697 Z" fill="#3c56c8"/><path d="M36 682 L47 685.5 V697.5 L36 693.5 Z" fill="#fff" stroke="#000" stroke-width="1.4"/><path d="M47 685.5 L52 682 V693 L47 697.5 Z" fill="#bbb"/><path d="M70 696 L70 706 L59 706 Z" fill="#6b6b6b"/><path d="M77.5 691 L84 681 H119 L110.5 691 Z" fill="url(#gBlueS)" stroke="#000" stroke-width="1.6"/><path d="M86 685 V667" stroke="#a39d98" stroke-width="2.6"/><path d="M81.5 668.5 L86 660.5 L90.5 668.5 Z" fill="#a39d98"/><path d="M98 685 V667" stroke="#a39d98" stroke-width="2.6"/><path d="M93.5 668.5 L98 660.5 L102.5 668.5 Z" fill="#a39d98"/><path d="M110 685 V667" stroke="#a39d98" stroke-width="2.6"/><path d="M105.5 668.5 L110 660.5 L114.5 668.5 Z" fill="#a39d98"/><path d="M126 696 L126 706 L115 706 Z" fill="#6b6b6b"/><rect x="135.3" y="659.3" width="8.2" height="8.2" fill="url(#gBlueS)" stroke="#000" stroke-width="1.7"/><rect x="149.20000000000002" y="659.3" width="8.2" height="8.2" fill="url(#gBlueS)" stroke="#000" stroke-width="1.7"/><rect x="163.10000000000002" y="659.3" width="8.2" height="8.2" fill="url(#gBlueS)" stroke="#000" stroke-width="1.7"/><rect x="135.3" y="673.15" width="8.2" height="8.2" fill="url(#gBlueS)" stroke="#000" stroke-width="1.7"/><rect x="149.20000000000002" y="673.15" width="8.2" height="8.2" fill="url(#gBlueS)" stroke="#000" stroke-width="1.7"/><rect x="163.10000000000002" y="673.15" width="8.2" height="8.2" fill="url(#gBlueS)" stroke="#000" stroke-width="1.7"/><rect x="135.3" y="687.0" width="8.2" height="8.2" fill="url(#gPage)" stroke="#000" stroke-width="1.7"/><rect x="149.20000000000002" y="687.0" width="8.2" height="8.2" fill="url(#gBlueS)" stroke="#000" stroke-width="1.7"/><rect x="163.10000000000002" y="687.0" width="8.2" height="8.2" fill="url(#gBlueS)" stroke="#000" stroke-width="1.7"/><path d="M182 696 L182 706 L171 706 Z" fill="#6b6b6b"/><rect x="201" y="659" width="18.5" height="10" fill="url(#gPage)" stroke="#000" stroke-width="1.8"/><rect x="205" y="673" width="10" height="8" fill="url(#gPage)" stroke="#000" stroke-width="1.8"/><rect x="203" y="685" width="14" height="12" fill="url(#gPage)" stroke="#000" stroke-width="1.8"/><path d="M210 656 V700" stroke="#d01010" stroke-width="2.2" opacity="0.85"/><path d="M238 696 L238 706 L227 706 Z" fill="#6b6b6b"/><path d="M24.7 722.1 L30.3 719.3 L39.4 723.7 L39.8 714.5 L59.2 723.3 V725.6 L49.7 751.8 L44.6 754.6 L24.7 746.3 Z" fill="#f2f2f2" stroke="#000" stroke-width="1.9" stroke-linejoin="round"/><path d="M35.5 726 L39.4 724 V740 L35.5 749 Z" fill="#bdbdbd"/><path d="M44.2 722.5 L49.2 720 L58.2 724.3 L45.2 753.3 L35.5 749 Z" fill="url(#gBend)"/><path d="M53.8 726.2 L58.2 724.3 L49.2 751.5 L45.2 753.3 Z" fill="#3a52c8"/><path d="M44.2 722.5 L35.5 749 M39.6 723.8 L44.2 722.5" fill="none" stroke="#000" stroke-width="1.8"/><path d="M70 752 L70 762 L59 762 Z" fill="#6b6b6b"/><rect x="89.2" y="713" width="5.8" height="42" fill="url(#gBlueS)" stroke="#000" stroke-width="1.6"/><circle cx="78.1" cy="723.9" r="4" fill="#231f20"/><circle cx="106" cy="723.9" r="4" fill="#231f20"/><path d="M76.5 731 L92 732.3 M96.5 730.8 Q101 732 109.5 731.2" fill="none" stroke="#231f20" stroke-width="2.2" stroke-linecap="round"/><path d="M78.2 731 L81 742 L91.5 742.3 L86.8 755 M109.5 731.5 L116.5 739.5 L112 746.5 L120.5 755" fill="none" stroke="#231f20" stroke-width="3.8" stroke-linejoin="miter" stroke-linecap="butt"/><path d="M126 752 L126 762 L115 762 Z" fill="#6b6b6b"/><path d="M134.5 739 L140 735 L144.5 743 Q155 725 173.5 715.5 Q157 730 144.5 752.5 Z" fill="#000"/><path d="M182 752 L182 762 L171 762 Z" fill="#6b6b6b"/><path d="M190 727 L200.5 718.5 L215 723 V737 L204 745 L190 740 Z" fill="#d9d9d9" stroke="#000" stroke-width="1.8" stroke-linejoin="round"/><path d="M191 727.5 L201 719.5 L214 723.5 L204 731 Z" fill="#f2f2f2"/><path d="M204 731 L214.5 723.5 V736.5 L204 744 Z" fill="#8c8c8c"/><path d="M219 719 L229.5 745 Q219 752 209 746 Z" fill="url(#gCyl)" stroke="#000" stroke-width="1.8" stroke-linejoin="round"/><path d="M238 752 L238 762 L227 762 Z" fill="#6b6b6b"/><path d="M24.5 804.5 L40.5 785 L57.5 800 L44 811 Z" fill="#f2d26f" stroke="#000" stroke-width="1.9" stroke-linejoin="round"/><path d="M40.5 786 L44 810 L56.5 800 Z" fill="#c9a234"/><g transform="translate(36 768) scale(0.93)"><path d="M1.2 12.2 Q0 11.6 1 10.4 L8 3.6 Q11 0.8 15 0.8 H26 V10.6 H20.5 L16.5 12.4 Q14.5 13.2 12.8 12.4 L9.5 12.7 Q7.5 12.9 6.8 12.2 Z" fill="#fff" stroke="#000" stroke-width="1.5" stroke-linejoin="round"/><path d="M4.5 10.6 L10.5 5 M7.8 11.4 L13 6.8 M11.2 12 L15.5 8.4" stroke="#000" stroke-width="1.1"/><rect x="25.5" y="0" width="4.2" height="11.4" fill="#000"/></g><path d="M70 808 L70 818 L59 818 Z" fill="#6b6b6b"/></svg>
<div class="a" style="left:6px;top:834px;width:252px;height:676px;background:#ececec;border-radius:8px 8px 0 0"></div>
<div class="t" style="left:7.9px;top:839.41px;font-size:25.5px;color:#8c8c8c;letter-spacing:0.274px;">Osnap</div>
<div class="a" style="left:79px;top:873px;width:179px;height:40px;background:#d8d9dd;border-radius:0 0 0 12px"></div>
<svg class="a" style="left:0;top:830" width="260" height="100"><polygon points="235.49,16.37 236.05,13.17 239.95,13.17 240.51,16.37 241.97,16.97 244.64,15.11 247.39,17.86 245.53,20.53 246.13,21.99 249.33,22.55 249.33,26.45 246.13,27.01 245.53,28.47 247.39,31.14 244.64,33.89 241.97,32.03 240.51,32.63 239.95,35.83 236.05,35.83 235.49,32.63 234.03,32.03 231.36,33.89 228.61,31.14 230.47,28.47 229.87,27.01 226.67,26.45 226.67,22.55 229.87,21.99 230.47,20.53 228.61,17.86 231.36,15.11 234.03,16.97" fill="#a9a9a9" stroke="#a9a9a9" stroke-width="0.8" stroke-linejoin="round"/><circle cx="238" cy="24.5" r="3.91" fill="#ececec"/><circle cx="40.5" cy="64.2" r="13.5" fill="none" stroke="#555" stroke-width="1.4"/><rect x="37" y="61" width="5.5" height="5.5" fill="#fff" stroke="#000" stroke-width="1.5"/><path d="M42.5 64.2 H57.5" stroke="#000" stroke-width="1.4"/><path d="M103 53 H123 L115.5 63 V74 Q113 77 111 77 Q108.5 77 108.5 74 V63 Z" fill="#9a9a9a" stroke="#000" stroke-width="1.3"/><path d="M104 53.5 H122 L118 58 H107 Z" fill="#ddd"/><path d="M122 50 H127.5 V55.5 M100 72.5 V78 H105.5" fill="none" stroke="#000" stroke-width="1.3"/></svg>
<div class="t" style="left:67.3px;top:933.78px;font-size:23.3px;color:#1a1a1a;letter-spacing:-1.285px;">End</div>
<div class="t" style="left:67.3px;top:963.78px;font-size:23.3px;color:#1a1a1a;letter-spacing:-0.700px;">Near</div>
<div class="t" style="left:67.3px;top:993.78px;font-size:23.3px;color:#1a1a1a;letter-spacing:-0.421px;">Point</div>
<div class="t" style="left:67.3px;top:1023.78px;font-size:23.3px;color:#1a1a1a;letter-spacing:-0.515px;">Mid</div>
<div class="t" style="left:67.3px;top:1053.78px;font-size:23.3px;color:#1a1a1a;letter-spacing:-1.114px;">Cen</div>
<div class="t" style="left:67.3px;top:1083.78px;font-size:23.3px;color:#1a1a1a;letter-spacing:-0.402px;">Int</div>
<div class="t" style="left:67.3px;top:1113.78px;font-size:23.3px;color:#1a1a1a;letter-spacing:-0.654px;">Perp</div>
<div class="t" style="left:67.3px;top:1143.78px;font-size:23.3px;color:#1a1a1a;letter-spacing:-0.789px;">Tan</div>
<div class="t" style="left:67.3px;top:1173.78px;font-size:23.3px;color:#1a1a1a;letter-spacing:-0.749px;">Quad</div>
<div class="t" style="left:67.3px;top:1203.78px;font-size:23.3px;color:#1a1a1a;letter-spacing:-0.232px;">Knot</div>
<div class="t" style="left:67.3px;top:1233.78px;font-size:23.3px;color:#1a1a1a;letter-spacing:-0.126px;">Vertex</div>
<div class="t" style="left:67.3px;top:1263.78px;font-size:23.3px;color:#1a1a1a;letter-spacing:-0.017px;">Project</div>
<div class="t" style="left:67.3px;top:1328.28px;font-size:23.3px;color:#1a1a1a;letter-spacing:-0.258px;">Disable</div>
<svg class="a" style="left:0;top:900" width="100" height="460"><defs><linearGradient id="gChkO" x1="0" y1="0" x2="0" y2="1"><stop offset="0" stop-color="#8c8c8c"/><stop offset="1" stop-color="#737373"/></linearGradient></defs><rect x="34" y="32" width="24" height="24" rx="5" fill="url(#gChkO)"/><path d="M39.5 44.8 L44.3 50.3 L52.3 37.8" fill="none" stroke="#fff" stroke-width="3.2" stroke-linecap="round" stroke-linejoin="round"/><rect x="34.5" y="62.5" width="23" height="23" rx="5" fill="#fff" stroke="#d2d2d2" stroke-width="1"/><rect x="34.5" y="92.5" width="23" height="23" rx="5" fill="#fff" stroke="#d2d2d2" stroke-width="1"/><rect x="34" y="122" width="24" height="24" rx="5" fill="url(#gChkO)"/><path d="M39.5 134.8 L44.3 140.3 L52.3 127.8" fill="none" stroke="#fff" stroke-width="3.2" stroke-linecap="round" stroke-linejoin="round"/><rect x="34" y="152" width="24" height="24" rx="5" fill="url(#gChkO)"/><path d="M39.5 164.8 L44.3 170.3 L52.3 157.8" fill="none" stroke="#fff" stroke-width="3.2" stroke-linecap="round" stroke-linejoin="round"/><rect x="34" y="182" width="24" height="24" rx="5" fill="url(#gChkO)"/><path d="M39.5 194.8 L44.3 200.3 L52.3 187.8" fill="none" stroke="#fff" stroke-width="3.2" stroke-linecap="round" stroke-linejoin="round"/><rect x="34" y="212" width="24" height="24" rx="5" fill="url(#gChkO)"/><path d="M39.5 224.8 L44.3 230.3 L52.3 217.8" fill="none" stroke="#fff" stroke-width="3.2" stroke-linecap="round" stroke-linejoin="round"/><rect x="34.5" y="242.5" width="23" height="23" rx="5" fill="#fff" stroke="#d2d2d2" stroke-width="1"/><rect x="34.5" y="272.5" width="23" height="23" rx="5" fill="#fff" stroke="#d2d2d2" stroke-width="1"/><rect x="34.5" y="302.5" width="23" height="23" rx="5" fill="#fff" stroke="#d2d2d2" stroke-width="1"/><rect x="34.5" y="332.5" width="23" height="23" rx="5" fill="#fff" stroke="#d2d2d2" stroke-width="1"/><rect x="34.5" y="362.5" width="23" height="23" rx="5" fill="#fff" stroke="#d2d2d2" stroke-width="1"/><rect x="34.5" y="427.0" width="23" height="23" rx="5" fill="#fff" stroke="#d2d2d2" stroke-width="1"/></svg>
<div class="a" style="left:264px;top:146px;width:1952px;height:1312px;background:#bfbfbf"></div>
<div class="a" style="left:264px;top:1458px;width:1952px;height:52px;background:#f0f0f0"></div>
<svg class="a" style="left:0;top:0" width="2880" height="1460"><rect x="709" y="400" width="1" height="834" fill="#6b6b6b"/><rect x="709" y="400" width="834" height="1" fill="#6b6b6b"/><rect x="730" y="400" width="1" height="834" fill="#6b6b6b"/><rect x="709" y="421" width="834" height="1" fill="#6b6b6b"/><rect x="751" y="400" width="1" height="834" fill="#6b6b6b"/><rect x="709" y="442" width="834" height="1" fill="#6b6b6b"/><rect x="771" y="400" width="1" height="834" fill="#6b6b6b"/><rect x="709" y="462" width="834" height="1" fill="#6b6b6b"/><rect x="792" y="400" width="1" height="834" fill="#6b6b6b"/><rect x="709" y="483" width="834" height="1" fill="#6b6b6b"/><rect x="813" y="400" width="1" height="834" fill="#6b6b6b"/><rect x="709" y="504" width="834" height="1" fill="#6b6b6b"/><rect x="834" y="400" width="1" height="834" fill="#6b6b6b"/><rect x="709" y="525" width="834" height="1" fill="#6b6b6b"/><rect x="855" y="400" width="1" height="834" fill="#6b6b6b"/><rect x="709" y="546" width="834" height="1" fill="#6b6b6b"/><rect x="876" y="400" width="1" height="834" fill="#6b6b6b"/><rect x="709" y="567" width="834" height="1" fill="#6b6b6b"/><rect x="896" y="400" width="1" height="834" fill="#6b6b6b"/><rect x="709" y="587" width="834" height="1" fill="#6b6b6b"/><rect x="917" y="400" width="1" height="834" fill="#6b6b6b"/><rect x="709" y="608" width="834" height="1" fill="#6b6b6b"/><rect x="938" y="400" width="1" height="834" fill="#6b6b6b"/><rect x="709" y="629" width="834" height="1" fill="#6b6b6b"/><rect x="959" y="400" width="1" height="834" fill="#6b6b6b"/><rect x="709" y="650" width="834" height="1" fill="#6b6b6b"/><rect x="980" y="400" width="1" height="834" fill="#6b6b6b"/><rect x="709" y="671" width="834" height="1" fill="#6b6b6b"/><rect x="1000" y="400" width="1" height="834" fill="#6b6b6b"/><rect x="709" y="691" width="834" height="1" fill="#6b6b6b"/><rect x="1021" y="400" width="1" height="834" fill="#6b6b6b"/><rect x="709" y="712" width="834" height="1" fill="#6b6b6b"/><rect x="1042" y="400" width="1" height="834" fill="#6b6b6b"/><rect x="709" y="733" width="834" height="1" fill="#6b6b6b"/><rect x="1063" y="400" width="1" height="834" fill="#6b6b6b"/><rect x="709" y="754" width="834" height="1" fill="#6b6b6b"/><rect x="1084" y="400" width="1" height="834" fill="#6b6b6b"/><rect x="709" y="775" width="834" height="1" fill="#6b6b6b"/><rect x="1105" y="400" width="1" height="834" fill="#6b6b6b"/><rect x="709" y="796" width="834" height="1" fill="#6b6b6b"/><rect x="1125" y="400" width="1" height="834" fill="#6b6b6b"/><rect x="709" y="816" width="834" height="1" fill="#6b6b6b"/><rect x="1146" y="400" width="1" height="834" fill="#6b6b6b"/><rect x="709" y="837" width="834" height="1" fill="#6b6b6b"/><rect x="1167" y="400" width="1" height="834" fill="#6b6b6b"/><rect x="709" y="858" width="834" height="1" fill="#6b6b6b"/><rect x="1188" y="400" width="1" height="834" fill="#6b6b6b"/><rect x="709" y="879" width="834" height="1" fill="#6b6b6b"/><rect x="1209" y="400" width="1" height="834" fill="#6b6b6b"/><rect x="709" y="900" width="834" height="1" fill="#6b6b6b"/><rect x="1230" y="400" width="1" height="834" fill="#6b6b6b"/><rect x="709" y="920" width="834" height="1" fill="#6b6b6b"/><rect x="1250" y="400" width="1" height="834" fill="#6b6b6b"/><rect x="709" y="941" width="834" height="1" fill="#6b6b6b"/><rect x="1271" y="400" width="1" height="834" fill="#6b6b6b"/><rect x="709" y="962" width="834" height="1" fill="#6b6b6b"/><rect x="1292" y="400" width="1" height="834" fill="#6b6b6b"/><rect x="709" y="983" width="834" height="1" fill="#6b6b6b"/><rect x="1313" y="400" width="1" height="834" fill="#6b6b6b"/><rect x="709" y="1004" width="834" height="1" fill="#6b6b6b"/><rect x="1334" y="400" width="1" height="834" fill="#6b6b6b"/><rect x="709" y="1025" width="834" height="1" fill="#6b6b6b"/><rect x="1354" y="400" width="1" height="834" fill="#6b6b6b"/><rect x="709" y="1045" width="834" height="1" fill="#6b6b6b"/><rect x="1375" y="400" width="1" height="834" fill="#6b6b6b"/><rect x="709" y="1066" width="834" height="1" fill="#6b6b6b"/><rect x="1396" y="400" width="1" height="834" fill="#6b6b6b"/><rect x="709" y="1087" width="834" height="1" fill="#6b6b6b"/><rect x="1417" y="400" width="1" height="834" fill="#6b6b6b"/><rect x="709" y="1108" width="834" height="1" fill="#6b6b6b"/><rect x="1438" y="400" width="1" height="834" fill="#6b6b6b"/><rect x="709" y="1129" width="834" height="1" fill="#6b6b6b"/><rect x="1459" y="400" width="1" height="834" fill="#6b6b6b"/><rect x="709" y="1150" width="834" height="1" fill="#6b6b6b"/><rect x="1479" y="400" width="1" height="834" fill="#6b6b6b"/><rect x="709" y="1170" width="834" height="1" fill="#6b6b6b"/><rect x="1500" y="400" width="1" height="834" fill="#6b6b6b"/><rect x="709" y="1191" width="834" height="1" fill="#6b6b6b"/><rect x="1521" y="400" width="1" height="834" fill="#6b6b6b"/><rect x="709" y="1212" width="834" height="1" fill="#6b6b6b"/><rect x="1542" y="400" width="1" height="834" fill="#6b6b6b"/><rect x="709" y="1233" width="834" height="1" fill="#6b6b6b"/><rect x="1125" y="400" width="2" height="417" fill="#3f8f3f"/><rect x="1126" y="816" width="416" height="2" fill="#9c4848"/><circle cx="1143.9" cy="828.9" r="283" fill="none" stroke="#000" stroke-width="1.4"/><circle cx="1143.9" cy="828.9" r="266.2" fill="none" stroke="#000" stroke-width="1.4"/><path d="M1137.4 1094.9 Q1143.9 1088.4 1150.4 1094.9" fill="none" stroke="#000" stroke-width="1.6"/><circle cx="1143.9" cy="828.9" r="235" fill="none" stroke="#cc1a1a" stroke-width="1.2" stroke-dasharray="3 1.2 1 1.2" opacity="0.9"/><circle cx="1143.9" cy="828.9" r="108" fill="none" stroke="#1424f0" stroke-width="1.3" stroke-dasharray="4 1.5 1.2 1.5"/><path d="M1143.9 690 V1112" stroke="#0a14f5" stroke-width="2" fill="none" stroke-dasharray="12 12.4"/><path d="M1050.4 579.5 V928" stroke="#0a14f5" stroke-width="2" fill="none" stroke-dasharray="12 12.4"/><path d="M1237.5 754.7 V928" stroke="#0a14f5" stroke-width="2" fill="none" stroke-dasharray="12 12.4"/><path d="M1029 774.8 H1447" stroke="#0a14f5" stroke-width="2" fill="none" stroke-dasharray="12 12.4"/><path d="M1029 883.1 H1447" stroke="#0a14f5" stroke-width="2" fill="none" stroke-dasharray="12 12.4"/><path d="M881 828.9 H1353" stroke="#0a14f5" stroke-width="2" fill="none" stroke-dasharray="12 12.4"/><circle cx="1143.9" cy="828.9" r="83.2" stroke="#cc1414" stroke-width="1.5" fill="none"/><circle cx="1143.90" cy="720.90" r="10.3" stroke="#cc1414" stroke-width="1.5" fill="none"/><circle cx="1237.43" cy="774.90" r="10.3" stroke="#cc1414" stroke-width="1.5" fill="none"/><circle cx="1237.43" cy="882.90" r="10.3" stroke="#cc1414" stroke-width="1.5" fill="none"/><circle cx="1143.90" cy="936.90" r="10.3" stroke="#cc1414" stroke-width="1.5" fill="none"/><circle cx="1050.37" cy="882.90" r="10.3" stroke="#cc1414" stroke-width="1.5" fill="none"/><circle cx="1050.37" cy="774.90" r="10.3" stroke="#cc1414" stroke-width="1.5" fill="none"/><path d="M1050.40 625.46 L1050.40 698.13 A18.0 18.0 0 0 0 1077.40 713.72 L1212.37 635.80 A18.0 18.0 0 0 0 1208.30 602.90 A235.0 235.0 0 0 0 1062.14 608.58 A18.0 18.0 0 0 0 1050.40 625.46 Z" stroke="#cc1414" stroke-width="1.5" fill="none" transform="rotate(0 1143.9 828.9)"/><path d="M1050.40 625.46 L1050.40 698.13 A18.0 18.0 0 0 0 1077.40 713.72 L1212.37 635.80 A18.0 18.0 0 0 0 1208.30 602.90 A235.0 235.0 0 0 0 1062.14 608.58 A18.0 18.0 0 0 0 1050.40 625.46 Z" stroke="#cc1414" stroke-width="1.5" fill="none" transform="rotate(60 1143.9 828.9)"/><path d="M1050.40 625.46 L1050.40 698.13 A18.0 18.0 0 0 0 1077.40 713.72 L1212.37 635.80 A18.0 18.0 0 0 0 1208.30 602.90 A235.0 235.0 0 0 0 1062.14 608.58 A18.0 18.0 0 0 0 1050.40 625.46 Z" stroke="#cc1414" stroke-width="1.5" fill="none" transform="rotate(120 1143.9 828.9)"/><path d="M1050.40 625.46 L1050.40 698.13 A18.0 18.0 0 0 0 1077.40 713.72 L1212.37 635.80 A18.0 18.0 0 0 0 1208.30 602.90 A235.0 235.0 0 0 0 1062.14 608.58 A18.0 18.0 0 0 0 1050.40 625.46 Z" stroke="#cc1414" stroke-width="1.5" fill="none" transform="rotate(180 1143.9 828.9)"/><path d="M1050.40 625.46 L1050.40 698.13 A18.0 18.0 0 0 0 1077.40 713.72 L1212.37 635.80 A18.0 18.0 0 0 0 1208.30 602.90 A235.0 235.0 0 0 0 1062.14 608.58 A18.0 18.0 0 0 0 1050.40 625.46 Z" stroke="#cc1414" stroke-width="1.5" fill="none" transform="rotate(240 1143.9 828.9)"/><path d="M1050.40 625.46 L1050.40 698.13 A18.0 18.0 0 0 0 1077.40 713.72 L1212.37 635.80 A18.0 18.0 0 0 0 1208.30 602.90 A235.0 235.0 0 0 0 1062.14 608.58 A18.0 18.0 0 0 0 1050.40 625.46 Z" stroke="#cc1414" stroke-width="1.5" fill="none" transform="rotate(300 1143.9 828.9)"/><path d="M912.06 790.52 A235 235 0 0 1 978.31 662.15" stroke="#8a3ee8" stroke-width="1.5" fill="none"/><path d="M336 1326 V1386 H396" fill="none" stroke="#8a8a8a" stroke-width="1.6"/></svg>
<div class="t" style="left:341.5px;top:1302.14px;font-size:27px;color:#5f5f5f;">y</div>
<div class="t" style="left:401px;top:1365.14px;font-size:27px;color:#5f5f5f;">x</div>
<svg class="a" style="left:0;top:1450px" width="1200" height="60"><rect x="284.5" y="20.5" width="29" height="25" fill="none" stroke="#8c8c8c" stroke-width="1.5"/><path d="M299 20.5 V45.5 M284.5 33 H313.5" stroke="#8c8c8c" stroke-width="1.5"/><rect x="285.5" y="21.5" width="5" height="1.5" fill="#8c8c8c"/><rect x="348.5" y="20.5" width="29" height="25" fill="none" stroke="#2f7bf0" stroke-width="1.5"/><rect x="349.5" y="21.5" width="5" height="2" fill="#2f7bf0"/><rect x="406.25" y="20" width="1.5" height="27" fill="#5a5a5a"/><rect x="628.25" y="20" width="1.5" height="27" fill="#5a5a5a"/><rect x="752.25" y="20" width="1.5" height="27" fill="#5a5a5a"/><rect x="896.25" y="20" width="1.5" height="27" fill="#5a5a5a"/><rect x="1040.25" y="20" width="1.5" height="27" fill="#5a5a5a"/></svg>
<div class="t" style="left:447px;top:1468.07px;font-size:26.5px;color:#666666;letter-spacing:0.195px;">Perspective</div>
<div class="t" style="left:669px;top:1468.07px;font-size:26.5px;color:#1a76ee;letter-spacing:-0.242px;">Top</div>
<div class="t" style="left:792.5px;top:1468.07px;font-size:26.5px;color:#666666;letter-spacing:-0.030px;">Front</div>
<div class="t" style="left:936px;top:1468.07px;font-size:26.5px;color:#666666;letter-spacing:0.028px;">Right</div>
<div class="t" style="left:1081.9px;top:1468.07px;font-size:26.5px;color:#666666;letter-spacing:-0.130px;">Layouts...</div>
<svg class="a" style="left:1781px;top:766.5px" width="40" height="50"><path d="M8.2 7.2 V36 L14.5 30 L19 40.5 L24.5 38.3 L20 28 H28.8 Z" fill="#000" stroke="#fff" stroke-width="2.2" stroke-linejoin="miter" filter="url(#cshadow)"/><defs><filter id="cshadow" x="-50%" y="-50%" width="200%" height="200%"><feDropShadow dx="0" dy="1" stdDeviation="1.2" flood-opacity="0.35"/></filter></defs></svg>
<div class="a" style="left:266px;top:148px;width:61px;height:38px;background:#00549a"></div>
<div class="a" style="left:328.5px;top:148px;width:31.5px;height:38px;background:#00549a"></div>
<div class="a" style="left:326.9px;top:148px;width:2px;height:38px;background:#ffffff"></div>
<div class="t" style="left:274.8px;top:155.68px;font-size:24px;color:#ffffff;letter-spacing:-0.034px;font-weight:bold;">Top</div>
<svg class="a" style="left:330px;top:160px" width="30" height="16"><path d="M6 3.7 H21.8 L13.9 12 Z" fill="#fff"/></svg>
<div class="a" style="left:2222px;top:146px;width:612px;height:1364px;background:#ececec;border-radius:8px 0 0 0"></div>
<div class="a" style="left:2834px;top:146px;width:40px;height:111px;background:#ececec;border-radius:0 10px 10px 0"></div>
<div class="a" style="left:2834px;top:257px;width:12px;height:12px;background:#ececec"></div>
<div class="a" style="left:2834px;top:257px;width:46px;height:1253px;background:#d8d9dd;border-radius:12px 0 0 0"></div>
<div class="a" style="left:2222px;top:183.5px;width:618px;height:2px;background:#d3d3d3"></div>
<div class="t" style="left:2224px;top:153.26px;font-size:24.5px;color:#8c8c8c;letter-spacing:0.985px;">Layouts</div>
<svg class="a" style="left:2830px;top:142px" width="40" height="40"><polygon points="21.49,15.87 22.05,12.67 25.95,12.67 26.51,15.87 27.97,16.47 30.64,14.61 33.39,17.36 31.53,20.03 32.13,21.49 35.33,22.05 35.33,25.95 32.13,26.51 31.53,27.97 33.39,30.64 30.64,33.39 27.97,31.53 26.51,32.13 25.95,35.33 22.05,35.33 21.49,32.13 20.03,31.53 17.36,33.39 14.61,30.64 16.47,27.97 15.87,26.51 12.67,25.95 12.67,22.05 15.87,21.49 16.47,20.03 14.61,17.36 17.36,14.61 20.03,16.47" fill="#c3c3c3" stroke="#c3c3c3" stroke-width="0.8" stroke-linejoin="round"/><circle cx="24" cy="24" r="3.91" fill="#ececec"/></svg>
<div class="a" style="left:2240px;top:257.5px;width:568px;height:41.2px;background:#fff;border-radius:11px;box-shadow:0 1px 1.5px rgba(0,0,0,0.22), 0 0 0 0.5px rgba(0,0,0,0.06)"></div>
<div class="t" style="left:2295px;top:266.99px;font-size:26px;color:#c2c2c2;letter-spacing:0.037px;">Search</div>
<div class="a" style="left:2240px;top:311.4px;width:568px;height:1181px;background:#fff;border:1px solid #e2e2e2;border-top-color:#e8e8e8"></div>
<div class="a" style="left:2240px;top:365px;width:568px;height:2px;background:#e6e6e6"></div>
<div class="a" style="left:2310.5px;top:324px;width:1.5px;height:32px;background:#dcdcdc"></div>
<div class="a" style="left:2470px;top:324px;width:1.5px;height:32px;background:#dcdcdc"></div>
<div class="a" style="left:2720px;top:324px;width:1.5px;height:32px;background:#dcdcdc"></div>
<div class="t" style="left:2257px;top:329.72px;font-size:21.6px;color:#222;letter-spacing:0.029px;">No.</div>
<div class="t" style="left:2316.6px;top:329.72px;font-size:21.6px;color:#222;letter-spacing:0.575px;">Layout</div>
<div class="t" style="left:2476.8px;top:329.72px;font-size:21.6px;color:#222;letter-spacing:0.020px;">Size</div>
<svg class="a" style="left:0;top:0;width:0;height:0"><defs><linearGradient id="gFoldL" x1="0" y1="0" x2="0" y2="1"><stop offset="0" stop-color="#ffe56a"/><stop offset="1" stop-color="#f2b10a"/></linearGradient><radialGradient id="gHelpL" cx="0.4" cy="0.3" r="0.8"><stop offset="0" stop-color="#6f8ff0"/><stop offset="0.6" stop-color="#3f63d6"/><stop offset="1" stop-color="#1b2f8a"/></radialGradient></defs></svg>
<svg class="a" style="left:2200px;top:140px" width="680" height="340"><path d="M50.00 69.50 H70 L72 71.5 V98 H50 Z" fill="#fff" stroke="#111" stroke-width="1.6"/><path d="M61.00 71.00 V97 M51.00 84.00 H71" stroke="#d8d8d8" stroke-width="1.2"/><path d="M65.50 82.00 V96 M58.50 89.00 H72.5" stroke="#000" stroke-width="3.2"/><path d="M92.50 70.50 H102 L105 73.5 V89 H92.5 Z" fill="#dadada" stroke="#a6a6a6" stroke-width="1.6"/><path d="M100.50 78.50 H112 L115.5 82 V97.5 H100.5 Z" fill="#dadada" stroke="#a6a6a6" stroke-width="1.6"/><path d="M136.00 73.00 L160 96 M160.00 73.00 L136 96" stroke="#a6a6a6" stroke-width="5" stroke-linecap="square"/><path d="M136.00 73.00 L160 96 M160.00 73.00 L136 96" stroke="#dadada" stroke-width="2.4"/><path d="M179.50 88.50 L192 74.5 L204.5 88.5 Z" fill="#dadada" stroke="#a6a6a6" stroke-width="1.8" stroke-linejoin="round"/><path d="M223.50 76.50 L248.5 76.5 L236 91.5 Z" fill="#dadada" stroke="#a6a6a6" stroke-width="1.8" stroke-linejoin="round"/><polygon points="289.90,84.00 293.14,86.63 292.37,89.17 288.21,89.56 286.97,91.07 287.40,95.22 285.07,96.47 281.85,93.81 279.90,94.00 277.27,97.24 274.73,96.47 274.34,92.31 272.83,91.07 268.68,91.50 267.43,89.17 270.09,85.95 269.90,84.00 266.66,81.37 267.43,78.83 271.59,78.44 272.83,76.93 272.40,72.78 274.73,71.53 277.95,74.19 279.90,74.00 282.53,70.76 285.07,71.53 285.46,75.69 286.97,76.93 291.12,76.50 292.37,78.83 289.71,82.05" fill="#dadada" stroke="#a6a6a6" stroke-width="1.5" stroke-linejoin="round"/><circle cx="279.9000000000001" cy="84" r="4.5" fill="#ececec" stroke="#a6a6a6" stroke-width="1.5"/><path d="M317.00 72.50 H335 Q332 77 331 84 H315 Q315 77 317 72.5 Z" fill="#fff" stroke="#000" stroke-width="1.6"/><path d="M312.00 84.00 H334 L337 81 V93 L334 97 H314 Q311.5 97 311.5 94.5 Z" fill="#9a9a9a" stroke="#000" stroke-width="1.6"/><path d="M312.00 89.00 H334 M312.00 93.00 H334" stroke="#e6e6e6" stroke-width="1.6"/><path d="M355.00 80.00 L357 77.5 H363 L366 80 H374 V97 H355 Z" fill="#ffe16b" stroke="#000" stroke-width="1.6"/><path d="M360.50 85.50 H382.5 L376.5 97.5 H355 Z" fill="url(#gFoldL)" stroke="#000" stroke-width="1.6" stroke-linejoin="round"/><circle cx="411.5999999999999" cy="83.69999999999999" r="14.5" fill="url(#gHelpL)"/><text x="411.5999999999999" y="94.5" text-anchor="middle" font-family="Liberation Serif" font-weight="bold" font-size="28" fill="#fff">?</text><circle cx="64.5" cy="136" r="8.8" fill="none" stroke="#222" stroke-width="2.3"/><path d="M71.00 142.50 L78.5 150" stroke="#222" stroke-width="2.8" stroke-linecap="round"/><path d="M643.50 67.50 H663 L666 70.5 V96.5 H643.5 Z" fill="#fff" stroke="#111" stroke-width="1.6"/><rect x="646.5" y="71.5" width="16" height="23" fill="none" stroke="#8a8a8a" stroke-width="1"/><path d="M654.50 71.50 V94.5 M646.50 83.00 H662.5" stroke="#8a8a8a" stroke-width="1"/><path d="M663.00 67.50 V70.5 H666" fill="none" stroke="#111" stroke-width="1.2"/><path d="M642.00 143.00 L666 149 L666 160 Q660 163 655 167 L642 156 Z" fill="#fff" stroke="#000" stroke-width="1.6"/><path d="M643.00 144.00 L665 149.5 L665 154 Q659 156 655 158 L643 149 Z" fill="#ff8a5a"/><path d="M655.00 158.00 Q660 156 665 153.5 V157 Q660 159.5 655 161.5 Z" fill="#e00000"/><path d="M655.00 163.00 Q660 161 665 158.5 V160 Q660 163 655 166 Z" fill="#1a2a90"/><path d="M643.00 152.00 L655 162 V166 L643 156 Z" fill="#5a7aff"/><path d="M639.00 296.00 L654 289 L669 296 L654 302 Z" fill="#111"/><path d="M646.00 299.00 V306 Q654 309 662 306 V299 L654 302 Z" fill="#444"/><path d="M642.00 297.00 V307" stroke="#111" stroke-width="1.6"/></svg>
<svg class="a" style="left:2830px;top:340px" width="50" height="50"><path d="M24.00 12.60 A13 13 0 0 1 25.78 12.72 L25.10 17.68 A8 8 0 0 0 24.00 17.60 Z" fill="#ff0000"/><path d="M25.70 12.71 A13 13 0 0 1 27.45 13.07 L26.12 17.89 A8 8 0 0 0 25.04 17.67 Z" fill="#ff1f00"/><path d="M27.36 13.04 A13 13 0 0 1 29.05 13.62 L27.11 18.23 A8 8 0 0 0 26.07 17.87 Z" fill="#ff3f00"/><path d="M28.97 13.59 A13 13 0 0 1 30.57 14.38 L28.05 18.70 A8 8 0 0 0 27.06 18.21 Z" fill="#ff5f00"/><path d="M30.50 14.34 A13 13 0 0 1 31.98 15.34 L28.91 19.29 A8 8 0 0 0 28.00 18.67 Z" fill="#ff7f00"/><path d="M31.91 15.29 A13 13 0 0 1 33.25 16.47 L29.69 19.98 A8 8 0 0 0 28.87 19.25 Z" fill="#ff9f00"/><path d="M33.19 16.41 A13 13 0 0 1 34.37 17.75 L30.38 20.77 A8 8 0 0 0 29.66 19.94 Z" fill="#ffbf00"/><path d="M34.31 17.69 A13 13 0 0 1 35.30 19.17 L30.95 21.65 A8 8 0 0 0 30.35 20.73 Z" fill="#ffdf00"/><path d="M35.26 19.10 A13 13 0 0 1 36.04 20.70 L31.41 22.59 A8 8 0 0 0 30.93 21.60 Z" fill="#ffff00"/><path d="M36.01 20.63 A13 13 0 0 1 36.58 22.32 L31.74 23.58 A8 8 0 0 0 31.39 22.54 Z" fill="#dfff00"/><path d="M36.56 22.24 A13 13 0 0 1 36.90 23.99 L31.94 24.61 A8 8 0 0 0 31.73 23.53 Z" fill="#bfff00"/><path d="M36.89 23.90 A13 13 0 0 1 37.00 25.69 L32.00 25.65 A8 8 0 0 0 31.93 24.56 Z" fill="#9fff00"/><path d="M37.00 25.60 A13 13 0 0 1 36.88 27.38 L31.92 26.70 A8 8 0 0 0 32.00 25.60 Z" fill="#7fff00"/><path d="M36.89 27.30 A13 13 0 0 1 36.53 29.05 L31.71 27.72 A8 8 0 0 0 31.93 26.64 Z" fill="#5fff00"/><path d="M36.56 28.96 A13 13 0 0 1 35.98 30.65 L31.37 28.71 A8 8 0 0 0 31.73 27.67 Z" fill="#3fff00"/><path d="M36.01 30.57 A13 13 0 0 1 35.22 32.17 L30.90 29.65 A8 8 0 0 0 31.39 28.66 Z" fill="#1fff00"/><path d="M35.26 32.10 A13 13 0 0 1 34.26 33.58 L30.31 30.51 A8 8 0 0 0 30.93 29.60 Z" fill="#00ff00"/><path d="M34.31 33.51 A13 13 0 0 1 33.13 34.85 L29.62 31.29 A8 8 0 0 0 30.35 30.47 Z" fill="#00ff1f"/><path d="M33.19 34.79 A13 13 0 0 1 31.85 35.97 L28.83 31.98 A8 8 0 0 0 29.66 31.26 Z" fill="#00ff3f"/><path d="M31.91 35.91 A13 13 0 0 1 30.43 36.90 L27.95 32.55 A8 8 0 0 0 28.87 31.95 Z" fill="#00ff5f"/><path d="M30.50 36.86 A13 13 0 0 1 28.90 37.64 L27.01 33.01 A8 8 0 0 0 28.00 32.53 Z" fill="#00ff7f"/><path d="M28.97 37.61 A13 13 0 0 1 27.28 38.18 L26.02 33.34 A8 8 0 0 0 27.06 32.99 Z" fill="#00ff9f"/><path d="M27.36 38.16 A13 13 0 0 1 25.61 38.50 L24.99 33.54 A8 8 0 0 0 26.07 33.33 Z" fill="#00ffbf"/><path d="M25.70 38.49 A13 13 0 0 1 23.91 38.60 L23.95 33.60 A8 8 0 0 0 25.04 33.53 Z" fill="#00ffdf"/><path d="M24.00 38.60 A13 13 0 0 1 22.22 38.48 L22.90 33.52 A8 8 0 0 0 24.00 33.60 Z" fill="#00ffff"/><path d="M22.30 38.49 A13 13 0 0 1 20.55 38.13 L21.88 33.31 A8 8 0 0 0 22.96 33.53 Z" fill="#00dfff"/><path d="M20.64 38.16 A13 13 0 0 1 18.95 37.58 L20.89 32.97 A8 8 0 0 0 21.93 33.33 Z" fill="#00bfff"/><path d="M19.03 37.61 A13 13 0 0 1 17.43 36.82 L19.95 32.50 A8 8 0 0 0 20.94 32.99 Z" fill="#009fff"/><path d="M17.50 36.86 A13 13 0 0 1 16.02 35.86 L19.09 31.91 A8 8 0 0 0 20.00 32.53 Z" fill="#007fff"/><path d="M16.09 35.91 A13 13 0 0 1 14.75 34.73 L18.31 31.22 A8 8 0 0 0 19.13 31.95 Z" fill="#005fff"/><path d="M14.81 34.79 A13 13 0 0 1 13.63 33.45 L17.62 30.43 A8 8 0 0 0 18.34 31.26 Z" fill="#003fff"/><path d="M13.69 33.51 A13 13 0 0 1 12.70 32.03 L17.05 29.55 A8 8 0 0 0 17.65 30.47 Z" fill="#001fff"/><path d="M12.74 32.10 A13 13 0 0 1 11.96 30.50 L16.59 28.61 A8 8 0 0 0 17.07 29.60 Z" fill="#0000ff"/><path d="M11.99 30.57 A13 13 0 0 1 11.42 28.88 L16.26 27.62 A8 8 0 0 0 16.61 28.66 Z" fill="#1f00ff"/><path d="M11.44 28.96 A13 13 0 0 1 11.10 27.21 L16.06 26.59 A8 8 0 0 0 16.27 27.67 Z" fill="#3f00ff"/><path d="M11.11 27.30 A13 13 0 0 1 11.00 25.51 L16.00 25.55 A8 8 0 0 0 16.07 26.64 Z" fill="#5f00ff"/><path d="M11.00 25.60 A13 13 0 0 1 11.12 23.82 L16.08 24.50 A8 8 0 0 0 16.00 25.60 Z" fill="#7f00ff"/><path d="M11.11 23.90 A13 13 0 0 1 11.47 22.15 L16.29 23.48 A8 8 0 0 0 16.07 24.56 Z" fill="#9f00ff"/><path d="M11.44 22.24 A13 13 0 0 1 12.02 20.55 L16.63 22.49 A8 8 0 0 0 16.27 23.53 Z" fill="#bf00ff"/><path d="M11.99 20.63 A13 13 0 0 1 12.78 19.03 L17.10 21.55 A8 8 0 0 0 16.61 22.54 Z" fill="#df00ff"/><path d="M12.74 19.10 A13 13 0 0 1 13.74 17.62 L17.69 20.69 A8 8 0 0 0 17.07 21.60 Z" fill="#ff00ff"/><path d="M13.69 17.69 A13 13 0 0 1 14.87 16.35 L18.38 19.91 A8 8 0 0 0 17.65 20.73 Z" fill="#ff00df"/><path d="M14.81 16.41 A13 13 0 0 1 16.15 15.23 L19.17 19.22 A8 8 0 0 0 18.34 19.94 Z" fill="#ff00bf"/><path d="M16.09 15.29 A13 13 0 0 1 17.57 14.30 L20.05 18.65 A8 8 0 0 0 19.13 19.25 Z" fill="#ff009f"/><path d="M17.50 14.34 A13 13 0 0 1 19.10 13.56 L20.99 18.19 A8 8 0 0 0 20.00 18.67 Z" fill="#ff007f"/><path d="M19.03 13.59 A13 13 0 0 1 20.72 13.02 L21.98 17.86 A8 8 0 0 0 20.94 18.21 Z" fill="#ff005f"/><path d="M20.64 13.04 A13 13 0 0 1 22.39 12.70 L23.01 17.66 A8 8 0 0 0 21.93 17.87 Z" fill="#ff003f"/><path d="M22.30 12.71 A13 13 0 0 1 24.09 12.60 L24.05 17.60 A8 8 0 0 0 22.96 17.67 Z" fill="#ff001f"/><circle cx="24" cy="25.6" r="8" fill="#fff"/><circle cx="24" cy="25.6" r="13" fill="none" stroke="#000" stroke-width="1.8"/></svg>
<div class="a" style="left:6px;top:1516px;width:2868px;height:227.5px;background:#ececec;border-radius:8px 0 0 8px"></div>
<div class="a" style="left:44px;top:1516px;width:2px;height:227px;background:#dddddd"></div>
<div class="a" style="left:46px;top:1516px;width:2828px;height:227px;background:#ffffff"></div>
<div class="t" style="left:33px;top:1736px;font-size:26px;color:#9e9e9e;letter-spacing:0.197px;transform-origin:0 0;transform:rotate(-90deg) translate(0,-22.01px)">Command History</div>
<div class="t" style="left:56.4px;top:1518.18px;font-size:24px;color:#1a1a1a;letter-spacing:-0.014px;">Successfully read file "/Users/vivianemacedo/Desktop/REPRESENTAÇÃO_DIGITAL/Bexercios/exercicio01.3dm"</div>
<div class="t" style="left:56.4px;top:1546.18px;font-size:24px;color:#1a1a1a;letter-spacing:-0.025px;">14 curves, 7 linear dimensions, 2 texts, 1 angular dimension added to selection.</div>
<div class="t" style="left:56.4px;top:1574.18px;font-size:24px;color:#1a1a1a;letter-spacing:-0.086px;">Command: _Delete</div>
<div class="t" style="left:56.4px;top:1602.18px;font-size:24px;color:#1a1a1a;letter-spacing:-0.078px;">Deleted 24 objects.</div>
<div class="t" style="left:56.4px;top:1630.18px;font-size:24px;color:#1a1a1a;letter-spacing:-0.042px;">54 curves added to selection.</div>
<div class="t" style="left:56.4px;top:1658.18px;font-size:24px;color:#1a1a1a;letter-spacing:-0.084px;">Command: M</div>
<div class="t" style="left:56.4px;top:1686.18px;font-size:24px;color:#1a1a1a;letter-spacing:-0.099px;">Command: _Move</div>
<div class="a" style="left:6px;top:1744px;width:2866px;height:50px;background:#ececec"></div>
<div class="a" style="left:1338px;top:1750px;width:101.5px;height:38px;background:#fff;border-radius:6px"></div>
<div class="a" style="left:1446px;top:1750px;width:102px;height:38px;background:#fff;border-radius:6px"></div>
<div class="a" style="left:1719.5px;top:1750px;width:225.5px;height:38px;background:#fff;border-radius:6px"></div>
<svg class="a" style="left:0;top:1740px" width="2880" height="60"><path d="M16 18 H40 V41.7 H16 Z M24 21.9 V37.8 H36 V21.9 Z" fill="#525252" fill-rule="evenodd"/><circle cx="55.4" cy="19.0" r="1.8" fill="#6e6e6e"/><rect x="61" y="17.2" width="21" height="3.6" rx="1.8" fill="#6e6e6e"/><circle cx="55.4" cy="29.85" r="1.8" fill="#6e6e6e"/><rect x="61" y="28.05" width="21" height="3.6" rx="1.8" fill="#6e6e6e"/><circle cx="55.4" cy="40.7" r="1.8" fill="#6e6e6e"/><rect x="61" y="38.900000000000006" width="21" height="3.6" rx="1.8" fill="#6e6e6e"/><rect x="874" y="13.6" width="32" height="32.4" fill="#000"/></svg>
<div class="t" style="left:121.5px;top:1759.99px;font-size:23.4px;color:#4a4a4a;letter-spacing:-0.841px;">CPlane</div>
<div class="t" style="left:264.7px;top:1759.99px;font-size:23.4px;color:#4a4a4a;letter-spacing:-0.659px;">x 319.01</div>
<div class="t" style="left:414.2px;top:1759.99px;font-size:23.4px;color:#4a4a4a;letter-spacing:-0.637px;">y 19.75</div>
<div class="t" style="left:579.4px;top:1759.99px;font-size:23.4px;color:#4a4a4a;letter-spacing:-0.405px;">z 0</div>
<div class="t" style="left:730px;top:1759.99px;font-size:23.4px;color:#4a4a4a;letter-spacing:-0.019px;">Meters</div>
<div class="t" style="left:919.5px;top:1759.99px;font-size:23.4px;color:#4a4a4a;letter-spacing:-0.020px;">Default</div>
<div class="t" style="left:1111px;top:1759.99px;font-size:23.4px;color:#4a4a4a;letter-spacing:-0.373px;">Grid Snap</div>
<div class="t" style="left:1256px;top:1759.99px;font-size:23.4px;color:#4a4a4a;letter-spacing:0.095px;">Ortho</div>
<div class="t" style="left:1354px;top:1759.99px;font-size:23.4px;color:#222;letter-spacing:-0.173px;font-weight:bold;">Planar</div>
<div class="t" style="left:1461.8px;top:1759.99px;font-size:23.4px;color:#222;letter-spacing:-0.283px;font-weight:bold;">Osnap</div>
<div class="t" style="left:1575.5px;top:1759.99px;font-size:23.4px;color:#4a4a4a;letter-spacing:-0.204px;">SmartTrack</div>
<div class="t" style="left:1736.6px;top:1759.99px;font-size:23.4px;color:#222;letter-spacing:-0.127px;font-weight:bold;">Gumball (CPlane)</div>
<div class="t" style="left:2005.7px;top:1759.99px;font-size:23.4px;color:#4a4a4a;letter-spacing:-0.085px;">Auto CPlane (Object)</div>
<div class="t" style="left:2276.3px;top:1759.99px;font-size:23.4px;color:#4a4a4a;letter-spacing:0.019px;">Record History</div>
<div class="t" style="left:2476.2px;top:1759.99px;font-size:23.4px;color:#4a4a4a;letter-spacing:0.117px;">Filter</div>
<div class="a" style="left:2575px;top:1750px;width:193px;height:40px;overflow:hidden">
<div class="t" style="left:0px;top:9.99px;font-size:23.4px;color:#4a4a4a;letter-spacing:0.176px;">Absolute tolerance</div>
</div>
<svg class="a" style="left:1950px;top:1750px" width="50" height="40"><path d="M20 18 V12.5 Q20 7 25.5 7 Q31 7 31 12.5 V18" fill="none" stroke="#a8a8a8" stroke-width="1.8"/><rect x="17" y="17.5" width="17" height="16" rx="3" fill="none" stroke="#a8a8a8" stroke-width="1.8"/></svg>
<svg class="a" style="left:2830px;top:1750px" width="50" height="40"><path d="M10 8.1 H33.9 V31.6 H10 Z M13.8 11.8 V28.2 H26 V11.8 Z" fill="#525252" fill-rule="evenodd"/></svg>
</body></html>
